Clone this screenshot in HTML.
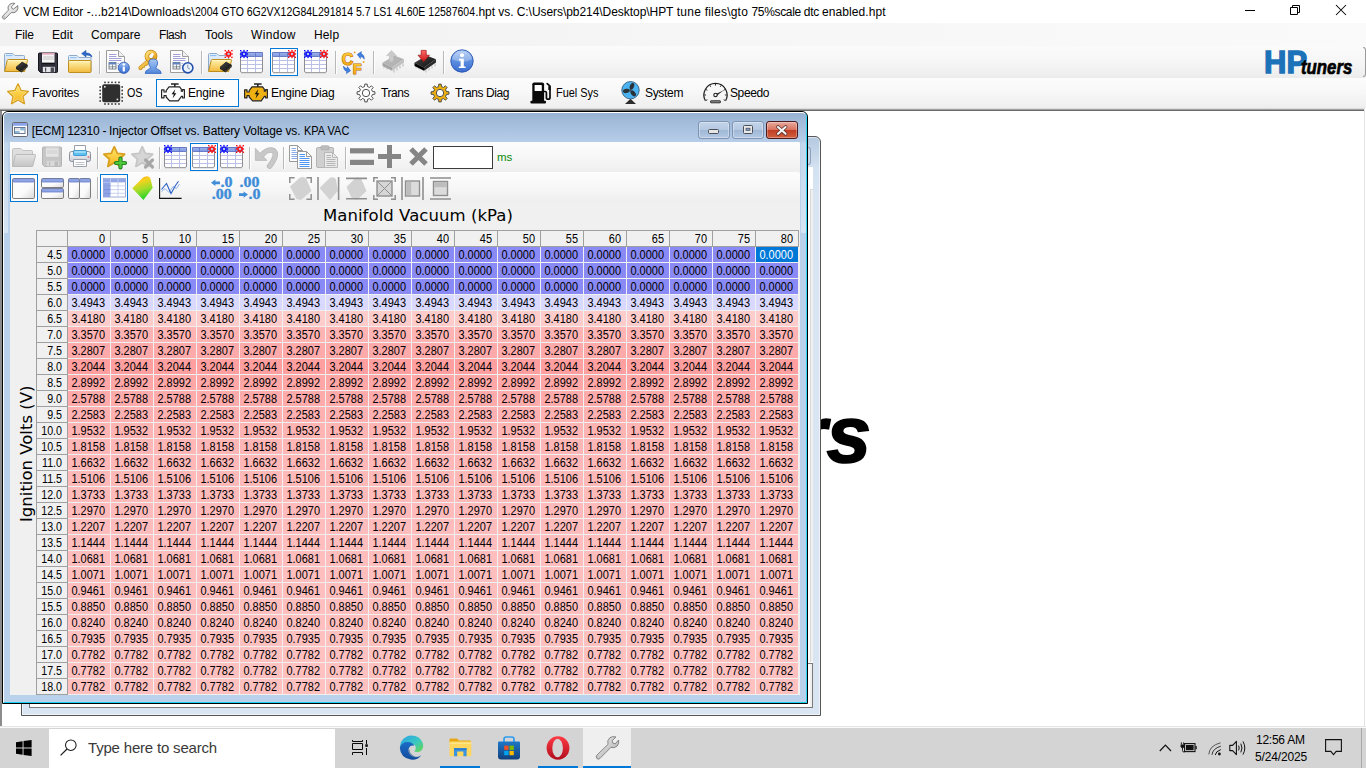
<!DOCTYPE html>
<html lang="en"><head><meta charset="utf-8"><title>VCM Editor</title>
<style>
*{box-sizing:border-box;margin:0;padding:0}
html,body{width:1366px;height:768px;overflow:hidden;background:#fff;font-family:"Liberation Sans",sans-serif;font-size:12px;color:#000}
body{position:relative}
.a{position:absolute}
.t{position:absolute;white-space:nowrap;line-height:1}
svg{position:absolute;overflow:visible}
/* title bar */
#titlebar{left:0;top:0;width:1366px;height:23px;background:#fff}
#menubar{left:0;top:23px;width:1366px;height:24px;background:linear-gradient(to right,#f1f1f1 0,#f3f3f3 30%,#f7f7f7 60%,#fafafa 100%)}
#toolbar{left:0;top:46px;width:1366px;height:32px;background:linear-gradient(#fbfbfb,#f6f6f6 50%,#ececec)}
#navbar{left:0;top:78px;width:1366px;height:30px;background:linear-gradient(#fcfcfc,#f7f7f7 50%,#eeeeee)}
.sep{position:absolute;width:1px;background:#b8b8b8;box-shadow:1px 0 0 #fff}
.selbox{position:absolute;border:1px solid #0078d7;background:#fcfcfc}
/* mdi */
#mdi{left:0;top:108px;width:1366px;height:618px;background:#fff;border-left:2px solid #8c8c8c;overflow:hidden}
/* grid */
.grid{position:absolute;left:36px;top:230px;width:763px;height:465px;background:#f0f0f0;font-size:12.5px;line-height:15px}
.grid i{display:block;margin-left:-14px;font-style:normal;transform:translateY(.8px) scaleX(.877);transform-origin:100% 50%}
.gr{display:flex;height:16px}
.gr span{display:block;height:16px;text-align:right;white-space:nowrap;overflow:hidden}
.rh{width:32px;border-left:1px solid #a0a0a0;border-right:1px solid #a0a0a0;border-bottom:1px solid #a0a0a0;background:#f0f0f0;padding-right:5px}
.hd .rh{border-top:1px solid #a0a0a0;height:17px}
.gr.hd{height:17px}
.gr.hd span{height:17px;line-height:15px}
.ch{width:43px;border-right:1px solid #a0a0a0;border-top:1px solid #a0a0a0;border-bottom:1px solid #a0a0a0;background:#f0f0f0;padding-right:5px}
.c{width:43px;border-right:1px solid #f0f0f0;border-bottom:1px solid #f0f0f0;background:var(--bg);padding-right:5px;background-clip:padding-box}
.c.sel{background:#0078d7;color:#fff}
.m{top:30px;font-size:12px}
.n{top:88px;font-size:12px}
#navbar .n{top:8.7px}
#menubar .m{top:6.3px}
.grip{position:absolute;width:3px;height:3px}
#hp{font-weight:bold;font-size:31px;color:#1c72b8;-webkit-text-stroke:1.3px #1c72b8;letter-spacing:0px;transform-origin:0 0}
#tun{font-weight:bold;font-style:italic;font-size:21px;color:#000;-webkit-text-stroke:.7px #000;transform:scaleX(.80);transform-origin:0 0}
#hpbig{font-weight:bold;font-size:135px;color:#1c72b8;letter-spacing:-6px;left:503px;top:205px}
#tunbig{font-weight:bold;font-style:italic;font-size:80px;color:#000;-webkit-text-stroke:1.6px #000;transform:scaleX(1);transform-origin:0 0;left:624.6px;top:287.4px}
#bgwin{left:21px;top:136px;width:800px;height:580px;border:1px solid #565656;border-radius:6px 6px 0 0;background:linear-gradient(#b4c9e0,#d3e1f0 30px,#d9e5f3 60px);box-shadow:inset 0 0 0 1px rgba(255,255,255,.55)}
#bgcap{left:786px;top:10px;width:3px;height:18px;border:1px solid #8fa3bf;border-left:none;border-radius:0 3px 3px 0;background:#c9d9ec}
#bgclient{left:7px;top:30px;width:784px;height:541px;background:#fff}
#child{left:2px;top:111px;width:806px;height:593px;border:1px solid #000;border-radius:6px 6px 0 0;background:#b9d1ea;overflow:hidden}
#cframe{left:0;top:0;width:804px;height:591px;border-radius:5px 5px 0 0;border:1px solid;border-color:#fff #2fd6f5 #19d3f0 #fff;background:linear-gradient(#98b3d3,#b7cee9 29px,#b9d1ea 30px)}
.ct{font-size:12px;top:13.3px}
.tt{font-size:12px;top:5.5px}
.capbtn{border:1px solid #7f93b2;border-radius:3px;background:linear-gradient(#c3d4e9,#b5c9e2 48%,#a0b8d6 52%,#b3c9e4);box-shadow:inset 0 0 0 1px rgba(255,255,255,.35)}
.capbtn.close{border-color:#4a1a1e;background:linear-gradient(#e8aa9e,#d9735f 48%,#c13d23 52%,#d2613f);box-shadow:inset 0 0 0 1px rgba(255,255,255,.3)}
#client{left:7px;top:30px;width:790px;height:553px;background:#f0f0f0}
.tb{background:linear-gradient(#fdfdfd,#f7f7f7 50%,#eeeeee);border-radius:0 3px 3px 0}
#client .grid{left:26px;top:88px}
#xtitle{font-family:"DejaVu Sans",sans-serif;font-size:16.5px;left:313px;top:65.8px}
#ytitle{font-family:"DejaVu Sans",sans-serif;font-size:16.5px;left:8.8px;top:380px;transform:rotate(-90deg);transform-origin:0 0}
#taskbar{left:0;top:728px;width:1366px;height:40px;background:#d4d4d4}
#search{left:49px;top:1px;width:286px;height:39px;background:#fff}

#mdiline{left:0;top:108px;width:1366px;height:3px;background:linear-gradient(#dcdcdc 0,#dcdcdc 1px,#a0a0a0 1px,#a0a0a0 2px,#696969 2px)}
#bgstrip{left:781px;top:22px;width:3px;height:473px;background:#f0f0f0;border-left:1px solid #d8d8d8;border-top:1px solid #d8d8d8}
#bgbox{left:0;top:496px;width:784px;height:45px;border:1px solid #7a7a7a;background:#fff;box-shadow:inset -2px 0 0 #f0f0f0}
.ul{top:38px;height:2px;background:#0078d7}
.grid .rh i{transform:translateY(.8px) scaleX(.855)}
#mdiright{left:1364px;top:108px;width:2px;height:618px;background:linear-gradient(to right,#e3e3e3 0,#e3e3e3 1px,#fff 1px)}
.refl{top:30px;height:91px;background:linear-gradient(rgba(255,255,255,.12),rgba(255,255,255,.42))}
#ttl1{letter-spacing:-0.146px}
#ttl2{letter-spacing:0.056px}
#ttl3{transform:scaleX(0.8749);transform-origin:0 0}
#ttl4{letter-spacing:-0.054px}
#ttl4b{letter-spacing:0.232px}
#ttl5{letter-spacing:-0.340px}
#ttl5b{letter-spacing:0.088px}
#mFile{letter-spacing:-0.111px}
#mEdit{letter-spacing:0.028px}
#mCompare{letter-spacing:0.020px}
#mFlash{letter-spacing:-0.449px}
#mTools{letter-spacing:-0.063px}
#mWindow{letter-spacing:0.335px}
#mHelp{letter-spacing:0.128px}
#nFav{letter-spacing:-0.262px}
#nOS{transform:scaleX(0.8937);transform-origin:0 0}
#nEng{letter-spacing:-0.162px}
#nEngD{letter-spacing:-0.172px}
#nTr{letter-spacing:-0.447px}
#nTrD{letter-spacing:-0.435px}
#nFuel{transform:scaleX(0.9103);transform-origin:0 0}
#nSys{letter-spacing:-0.319px}
#nSpd{letter-spacing:-0.379px}
#ct1{letter-spacing:-0.221px}
#ct2{letter-spacing:-0.132px}
#ct3{transform:scaleX(0.9137);transform-origin:0 0}
#xtitle{letter-spacing:0.058px}
#srch{letter-spacing:-0.188px}
#clk{letter-spacing:-0.250px}
#dat{letter-spacing:-0.155px}

</style></head>
<body>
<svg width="0" height="0" style="left:0;top:0"><defs>
<linearGradient id="gFold" x1="0" y1="0" x2="0" y2="1"><stop offset="0" stop-color="#fff3b0"/><stop offset="1" stop-color="#f2b93c"/></linearGradient>
<linearGradient id="gFoldB" x1="0" y1="0" x2="0" y2="1"><stop offset="0" stop-color="#e8f1fb"/><stop offset="1" stop-color="#b8d2ee"/></linearGradient>
<linearGradient id="gGrayF" x1="0" y1="0" x2="0" y2="1"><stop offset="0" stop-color="#e4e4e4"/><stop offset="1" stop-color="#c4c4c4"/></linearGradient>
<linearGradient id="gStar" x1="0" y1="0" x2="0" y2="1"><stop offset="0" stop-color="#ffe96a"/><stop offset="1" stop-color="#f6b21d"/></linearGradient>
<linearGradient id="gInfo" x1="0" y1="0" x2="0" y2="1"><stop offset="0" stop-color="#a4c4f4"/><stop offset="0.5" stop-color="#5c8ee0"/><stop offset="1" stop-color="#3a6cd0"/></linearGradient>
<linearGradient id="gHdr" x1="0" y1="0" x2="0" y2="1"><stop offset="0" stop-color="#9fb4ec"/><stop offset="1" stop-color="#7f97de"/></linearGradient>
<linearGradient id="gPane" x1="0" y1="0" x2="1" y2="1"><stop offset="0" stop-color="#ffffff"/><stop offset="0.6" stop-color="#fafafa"/><stop offset="1" stop-color="#d8d8d8"/></linearGradient>
<linearGradient id="gUser" x1="0" y1="0" x2="0" y2="1"><stop offset="0" stop-color="#a9c8f5"/><stop offset="1" stop-color="#4f86da"/></linearGradient>
<linearGradient id="gKey" x1="0" y1="0" x2="1" y2="1"><stop offset="0" stop-color="#ffe27a"/><stop offset="1" stop-color="#e39a12"/></linearGradient>
<linearGradient id="gSurf" x1="0" y1="0" x2="0.3" y2="1"><stop offset="0" stop-color="#ff8a1e"/><stop offset="0.3" stop-color="#f7d21c"/><stop offset="0.65" stop-color="#9fdc2a"/><stop offset="1" stop-color="#2ed42a"/></linearGradient>
<linearGradient id="gCF" x1="0" y1="0" x2="0" y2="1"><stop offset="0" stop-color="#ffd23a"/><stop offset="1" stop-color="#f39a0c"/></linearGradient>
<linearGradient id="gChip" x1="0" y1="0" x2="1" y2="1"><stop offset="0" stop-color="#4a4a4a"/><stop offset="1" stop-color="#0c0c0c"/></linearGradient>
<linearGradient id="gRedA" x1="0" y1="0" x2="0" y2="1"><stop offset="0" stop-color="#ff6a6a"/><stop offset="1" stop-color="#c81414"/></linearGradient>
<linearGradient id="gPrn" x1="0" y1="0" x2="0" y2="1"><stop offset="0" stop-color="#f8f8f8"/><stop offset="1" stop-color="#c9ced6"/></linearGradient>
<linearGradient id="gClose" x1="0" y1="0" x2="0" y2="1"><stop offset="0" stop-color="#e9a79b"/><stop offset="0.45" stop-color="#d4614d"/><stop offset="0.5" stop-color="#c43c25"/><stop offset="1" stop-color="#d4623a"/></linearGradient>
<linearGradient id="gCapBtn" x1="0" y1="0" x2="0" y2="1"><stop offset="0" stop-color="#dfe8f3"/><stop offset="0.45" stop-color="#c7d6e9"/><stop offset="0.5" stop-color="#b3c6de"/><stop offset="1" stop-color="#c4d6ec"/></linearGradient>

<linearGradient id="gEdge1" x1="0" y1="0" x2="1" y2="1"><stop offset="0" stop-color="#2aa0e8"/><stop offset="0.55" stop-color="#3ac8c0"/><stop offset="1" stop-color="#6ad848"/></linearGradient>
<linearGradient id="gEdge2" x1="0" y1="0" x2="0" y2="1"><stop offset="0" stop-color="#1c6cc8"/><stop offset="1" stop-color="#124c9c"/></linearGradient>
<linearGradient id="gStore" x1="0" y1="0" x2="0" y2="1"><stop offset="0" stop-color="#1d78c8"/><stop offset="1" stop-color="#12407c"/></linearGradient>
<linearGradient id="gOpera" x1="0" y1="0" x2="0" y2="1"><stop offset="0" stop-color="#ff3a44"/><stop offset="1" stop-color="#b00c1c"/></linearGradient>
<linearGradient id="gWr2" x1="0" y1="0" x2="1" y2="1"><stop offset="0" stop-color="#fafafa"/><stop offset="1" stop-color="#cfcfcf"/></linearGradient>
<linearGradient id="gWr" x1="0" y1="0" x2="1" y2="1"><stop offset="0" stop-color="#f2f2f2"/><stop offset="1" stop-color="#a8a8a8"/></linearGradient>
</defs></svg>
<div id="titlebar" class="a">
<svg style="left:2px;top:3px" width="17" height="17" viewBox="0 0 17 17"><path d="M0.5 13.3L6.3 7.3Q5 3.6 7.8 1.3Q10 -0.3 12.9 0.3L9.6 3.6Q9.2 5.6 11.4 6.2L15.8 2.6Q16.6 6 14.4 8.4Q12.2 10.4 9.2 9.6L3.4 15.6Q2.2 16.6 1 15.6Q-0.2 14.4 0.5 13.3Z" fill="url(#gWr2)" stroke="#727272" stroke-width="0.9"/><ellipse cx="2.1" cy="14.3" rx="1.1" ry="0.8" transform="rotate(-45 2.1 14.3)" fill="#eee" stroke="#8a8a8a" stroke-width="0.5"/></svg>
<div class="t tt" id="ttl1" style="left:23.2px">VCM Editor</div> <div class="t tt" id="ttl2" style="left:86.8px">-...b214\Downloads\</div> <div class="t tt" id="ttl3" style="left:194.7px">2004 GTO 6G2VX12G84L291814 5.7 LS1 4L60E 12587604</div><div class="t tt" id="ttl4" style="left:475.2px">.hpt vs. C:\Users\pb214\Desktop\HPT</div> <div class="t tt" id="ttl4b" style="left:676.8px">tune files\gto</div> <div class="t tt" id="ttl5" style="left:751.5px">75%scale dtc</div> <div class="t tt" id="ttl5b" style="left:821.9px">enabled.hpt</div>
<svg style="left:1245px;top:5px" width="12" height="12" viewBox="0 0 12 12"><path d="M0 5.5H10" stroke="#000" stroke-width="1" fill="none"/></svg>
<svg style="left:1290px;top:5px" width="12" height="12" viewBox="0 0 12 12"><path d="M0.5 2.5H7.5V9.5H0.5ZM2.5 2.5V0.5H9.5V7.5H7.5" stroke="#000" stroke-width="1" fill="none"/></svg>
<svg style="left:1336px;top:5px" width="12" height="12" viewBox="0 0 12 12"><path d="M0 0L10 10M10 0L0 10" stroke="#000" stroke-width="1.05" fill="none"/></svg>
</div>
<div id="menubar" class="a">
<div class="t m" id="mFile" style="left:15px">File</div>
<div class="t m" id="mEdit" style="left:52px">Edit</div>
<div class="t m" id="mCompare" style="left:91px">Compare</div>
<div class="t m" id="mFlash" style="left:159px">Flash</div>
<div class="t m" id="mTools" style="left:205px">Tools</div>
<div class="t m" id="mWindow" style="left:251px">Window</div>
<div class="t m" id="mHelp" style="left:314px">Help</div>
</div>
<div id="toolbar" class="a">
<div class="grip" style="left:0;top:1px"></div>
<svg style="left:4px;top:4px" width="24" height="24" viewBox="0 0 24 24"><path d="M0.5 21V4.5Q0.5 3.5 1.5 3.5H8.8L10.8 5.5H19.5Q20.5 5.5 20.5 6.5V10" fill="url(#gFoldB)" stroke="#8fa9c8"/><path d="M2 5.5H8.5" stroke="#8cc0f8" stroke-width="1.2"/><path d="M0.6 21.5L3.2 10.5Q3.5 9.5 4.5 9.5H22.8Q23.8 9.5 23.5 10.5L20.6 21.5Z" fill="url(#gFold)" stroke="#bf8f1e"/><path d="M4.4 10.6H22.4" stroke="#fff6c8" stroke-width="0.9"/><g transform="translate(12 11.6) scale(1.02)"><path d="M0 5.5L6 0.5L11.5 3.5L5.5 9Z" fill="url(#gChip)" stroke="#111" stroke-width="0.6"/><path d="M0 5.5L5.5 9V10.8L0 7.3Z" fill="#222"/><path d="M5.5 9L11.5 3.5V5.2L5.5 10.8Z" fill="#333"/></g></svg>
<svg style="left:36px;top:4.5px" width="24" height="24" viewBox="0 0 24 24"><path d="M2.5 3Q2.5 2 3.5 2H20.5Q21.5 2 21.5 3V20.5Q21.5 21.5 20.5 21.5H4.5L2.5 19.5Z" fill="#2b2b36" stroke="#15151c"/><path d="M4 3V19M20 3V20" stroke="#4a4a58" stroke-width="0.8"/><rect x="6" y="2" width="12.5" height="9.8" fill="#f4f4f4"/><rect x="6" y="2" width="12.5" height="1.6" fill="#e4a4bc"/><rect x="7" y="5" width="10.5" height="4" fill="#dcdcdc"/><path d="M6 12.3H18.5" stroke="#0c0c12" stroke-width="1"/><rect x="6.8" y="15.8" width="12" height="5.4" fill="#e4e4ea"/><rect x="14.6" y="16.4" width="3.4" height="4.6" fill="#4c4c56"/><rect x="9" y="16.6" width="1.2" height="4" fill="#4c4c56"/></svg>
<svg style="left:68px;top:4px" width="25" height="24" viewBox="0 0 25 24"><path d="M0.5 21V6.5Q0.5 5.5 1.5 5.5H9L11 7.5H22Q23 7.5 23 8.5V21Q23 22 22 22H1.5Q0.5 22 0.5 21Z" fill="url(#gFoldB)" stroke="#8fa9c8"/><path d="M2 7.6H8.6" stroke="#8cc0f8" stroke-width="1.1"/><path d="M0.5 21.5V11.5Q0.5 10.5 1.5 10.5H22Q23 10.5 23 11.5V21.5Q23 22.5 22 22.5H1.5Q0.5 22.5 0.5 21.5Z" fill="url(#gFold)" stroke="#bf8f1e"/><path d="M1.6 11.7H22" stroke="#fff6c8" stroke-width="0.9"/><path d="M24 7.2Q23.4 2.8 18 3V0.4L13.6 3.6L18 6.9V5Q21.5 4.8 24 7.2Z" fill="#2a6ac8" stroke="#1a4c9c" stroke-width="0.5"/></svg>
<div class="sep" style="left:99px;top:5px;height:23px"></div>
<svg style="left:106px;top:4px" width="24" height="24" viewBox="0 0 24 24"><path d="M0.5 0.5H12.5L18.5 6.5V22.5H0.5Z" fill="#fdfdfd" stroke="#9c9c9c"/><path d="M12.5 0.5V6.5H18.5" fill="#f0f0f0" stroke="#9c9c9c"/><path d="M3 4.5H10.5M3 6.5H10.5M3 8.5H15.5M3 10.5H15.5" stroke="#9a96d4" stroke-width="0.9"/><rect x="3" y="12.5" width="7" height="6.5" fill="#fff" stroke="#707880" stroke-width="0.9"/><rect x="3" y="12.5" width="7" height="2" fill="#5f86c4"/><path d="M6.5 14.5V19M3 16.8H10" stroke="#707880" stroke-width="0.8"/><path d="M11.5 13.5H13M11.5 15.5H12.5" stroke="#9a96d4" stroke-width="0.8"/><circle cx="17.8" cy="17.8" r="5.6" fill="url(#gInfo)" stroke="#2a55b0" stroke-width="0.8"/><rect x="16.7" y="16.6" width="2.2" height="4.8" fill="#fff"/><circle cx="17.8" cy="14.6" r="1.25" fill="#fff"/></svg>
<svg style="left:137.5px;top:4px" width="25" height="24" viewBox="0 0 25 24"><path d="M9.8 9.2L0.8 17L1.2 19.6L4 19.4L4.4 17.6L6.4 17.6L6.8 15.6L8.8 15.4L12.6 12Z" fill="url(#gKey)" stroke="#c07f08" stroke-width="0.7"/><circle cx="13" cy="6.2" r="4.2" fill="none" stroke="#c07f08" stroke-width="4.4"/><circle cx="13" cy="6.2" r="4.2" fill="none" stroke="url(#gKey)" stroke-width="3.2"/><circle cx="14.2" cy="4.6" r="1.5" fill="#fff"/><path d="M7.2 23.4Q7.2 20.4 10.8 19.2Q12.6 18.6 12.4 17.2Q10.8 15.6 10.8 13Q10.8 9 15.2 9Q19.6 9 19.6 13Q19.6 15.6 18 17.2Q17.8 18.6 19.6 19.2Q23.2 20.4 23.2 23.4Z" fill="url(#gUser)" stroke="#2f62c0" stroke-width="0.8"/></svg>
<svg style="left:170px;top:4px" width="24" height="24" viewBox="0 0 24 24"><path d="M0.5 0.5H12.5L18.5 6.5V22.5H0.5Z" fill="#fdfdfd" stroke="#9c9c9c"/><path d="M12.5 0.5V6.5H18.5" fill="#f0f0f0" stroke="#9c9c9c"/><path d="M3 4.5H10.5M3 6.5H10.5M3 8.5H15.5M3 10.5H15.5" stroke="#9a96d4" stroke-width="0.9"/><rect x="3" y="12.5" width="7" height="6.5" fill="#fff" stroke="#707880" stroke-width="0.9"/><rect x="3" y="12.5" width="7" height="2" fill="#5f86c4"/><path d="M6.5 14.5V19M3 16.8H10" stroke="#707880" stroke-width="0.8"/><path d="M11.5 13.5H13M11.5 15.5H12.5" stroke="#9a96d4" stroke-width="0.8"/><circle cx="17.8" cy="17.8" r="5.1" fill="#eaf2fc" stroke="#2450ac" stroke-width="1.6"/><path d="M17.8 14.6V18L20 19.2" stroke="#8a96b0" stroke-width="1" fill="none"/></svg>
<div class="sep" style="left:201px;top:5px;height:23px"></div>
<svg style="left:208px;top:4px" width="24" height="24" viewBox="0 0 24 24"><path d="M0.5 21V4.5Q0.5 3.5 1.5 3.5H8.8L10.8 5.5H19.5Q20.5 5.5 20.5 6.5V10" fill="url(#gFoldB)" stroke="#8fa9c8"/><path d="M2 5.5H8.5" stroke="#8cc0f8" stroke-width="1.2"/><path d="M0.6 21.5L3.2 10.5Q3.5 9.5 4.5 9.5H22.8Q23.8 9.5 23.5 10.5L20.6 21.5Z" fill="url(#gFold)" stroke="#bf8f1e"/><path d="M4.4 10.6H22.4" stroke="#fff6c8" stroke-width="0.9"/><g transform="translate(12 11.6) scale(1.02)"><path d="M0 5.5L6 0.5L11.5 3.5L5.5 9Z" fill="url(#gChip)" stroke="#111" stroke-width="0.6"/><path d="M0 5.5L5.5 9V10.8L0 7.3Z" fill="#222"/><path d="M5.5 9L11.5 3.5V5.2L5.5 10.8Z" fill="#333"/></g><g transform="translate(16.6 0)"><rect x="0.00" y="0.00" width="1.4" height="1.4" fill="#ff1010"/><rect x="6.60" y="0.00" width="1.4" height="1.4" fill="#ff1010"/><rect x="0.00" y="6.60" width="1.4" height="1.4" fill="#ff1010"/><rect x="6.60" y="6.60" width="1.4" height="1.4" fill="#ff1010"/><rect x="3.30" y="-0.10" width="1.4" height="1.4" fill="#ff1010"/><rect x="3.30" y="6.70" width="1.4" height="1.4" fill="#ff1010"/><rect x="-0.10" y="3.30" width="1.4" height="1.4" fill="#ff1010"/><rect x="6.70" y="3.30" width="1.4" height="1.4" fill="#ff1010"/><path d="M1.6 1.6L6.4 6.4M6.4 1.6L1.6 6.4" stroke="#ff1010" stroke-width="1"/><circle cx="4" cy="4" r="2.05" fill="#b4c4e4" stroke="#ff1010" stroke-width="1.6"/></g></svg>
<svg style="left:240px;top:4px" width="24" height="24" viewBox="0 0 24 24"><path d="M0.5 2.5H22.5V21Q22.5 22.5 21 22.5H2Q0.5 22.5 0.5 21Z" fill="#fff" stroke="#8e8e92"/><path d="M1 22.9H22" stroke="#b8b8b8" stroke-width="0.8"/><path d="M1 10.5H22M1 14.5H22M1 18.5H22M7.5 6V22M15.5 6V22" stroke="#bcc0e6" stroke-width="1" fill="none"/><rect x="0.5" y="2.5" width="22" height="4" rx="0.8" fill="url(#gHdr)" stroke="#5f74c6" stroke-width="0.9"/><path d="M7.5 2.5V6.5M15.5 2.5V6.5" stroke="#5f74c6" stroke-width="0.8"/><g transform="translate(0 0)"><rect x="0.00" y="0.00" width="1.4" height="1.4" fill="#1010ff"/><rect x="6.60" y="0.00" width="1.4" height="1.4" fill="#1010ff"/><rect x="0.00" y="6.60" width="1.4" height="1.4" fill="#1010ff"/><rect x="6.60" y="6.60" width="1.4" height="1.4" fill="#1010ff"/><rect x="3.30" y="-0.10" width="1.4" height="1.4" fill="#1010ff"/><rect x="3.30" y="6.70" width="1.4" height="1.4" fill="#1010ff"/><rect x="-0.10" y="3.30" width="1.4" height="1.4" fill="#1010ff"/><rect x="6.70" y="3.30" width="1.4" height="1.4" fill="#1010ff"/><path d="M1.6 1.6L6.4 6.4M6.4 1.6L1.6 6.4" stroke="#1010ff" stroke-width="1"/><circle cx="4" cy="4" r="2.05" fill="#b4c4e4" stroke="#1010ff" stroke-width="1.6"/></g></svg>
<div class="selbox" style="left:270px;top:2px;width:28px;height:28px"></div>
<svg style="left:272px;top:4px" width="24" height="24" viewBox="0 0 24 24"><path d="M0.5 2.5H22.5V21Q22.5 22.5 21 22.5H2Q0.5 22.5 0.5 21Z" fill="#fff" stroke="#8e8e92"/><path d="M1 22.9H22" stroke="#b8b8b8" stroke-width="0.8"/><path d="M1 10.5H22M1 14.5H22M1 18.5H22M7.5 6V22M15.5 6V22" stroke="#bcc0e6" stroke-width="1" fill="none"/><rect x="0.5" y="2.5" width="22" height="4" rx="0.8" fill="url(#gHdr)" stroke="#5f74c6" stroke-width="0.9"/><path d="M7.5 2.5V6.5M15.5 2.5V6.5" stroke="#5f74c6" stroke-width="0.8"/><g transform="translate(16 0)"><rect x="0.00" y="0.00" width="1.4" height="1.4" fill="#ff1010"/><rect x="6.60" y="0.00" width="1.4" height="1.4" fill="#ff1010"/><rect x="0.00" y="6.60" width="1.4" height="1.4" fill="#ff1010"/><rect x="6.60" y="6.60" width="1.4" height="1.4" fill="#ff1010"/><rect x="3.30" y="-0.10" width="1.4" height="1.4" fill="#ff1010"/><rect x="3.30" y="6.70" width="1.4" height="1.4" fill="#ff1010"/><rect x="-0.10" y="3.30" width="1.4" height="1.4" fill="#ff1010"/><rect x="6.70" y="3.30" width="1.4" height="1.4" fill="#ff1010"/><path d="M1.6 1.6L6.4 6.4M6.4 1.6L1.6 6.4" stroke="#ff1010" stroke-width="1"/><circle cx="4" cy="4" r="2.05" fill="#b4c4e4" stroke="#ff1010" stroke-width="1.6"/></g></svg>
<svg style="left:304px;top:4px" width="24" height="24" viewBox="0 0 24 24"><path d="M0.5 2.5H22.5V21Q22.5 22.5 21 22.5H2Q0.5 22.5 0.5 21Z" fill="#fff" stroke="#8e8e92"/><path d="M1 22.9H22" stroke="#b8b8b8" stroke-width="0.8"/><path d="M1 10.5H22M1 14.5H22M1 18.5H22M7.5 6V22M15.5 6V22" stroke="#bcc0e6" stroke-width="1" fill="none"/><rect x="0.5" y="2.5" width="22" height="4" rx="0.8" fill="url(#gHdr)" stroke="#5f74c6" stroke-width="0.9"/><path d="M7.5 2.5V6.5M15.5 2.5V6.5" stroke="#5f74c6" stroke-width="0.8"/><g transform="translate(0 0)"><rect x="0.00" y="0.00" width="1.4" height="1.4" fill="#1010ff"/><rect x="6.60" y="0.00" width="1.4" height="1.4" fill="#1010ff"/><rect x="0.00" y="6.60" width="1.4" height="1.4" fill="#1010ff"/><rect x="6.60" y="6.60" width="1.4" height="1.4" fill="#1010ff"/><rect x="3.30" y="-0.10" width="1.4" height="1.4" fill="#1010ff"/><rect x="3.30" y="6.70" width="1.4" height="1.4" fill="#1010ff"/><rect x="-0.10" y="3.30" width="1.4" height="1.4" fill="#1010ff"/><rect x="6.70" y="3.30" width="1.4" height="1.4" fill="#1010ff"/><path d="M1.6 1.6L6.4 6.4M6.4 1.6L1.6 6.4" stroke="#1010ff" stroke-width="1"/><circle cx="4" cy="4" r="2.05" fill="#b4c4e4" stroke="#1010ff" stroke-width="1.6"/></g><g transform="translate(16 0)"><rect x="0.00" y="0.00" width="1.4" height="1.4" fill="#ff1010"/><rect x="6.60" y="0.00" width="1.4" height="1.4" fill="#ff1010"/><rect x="0.00" y="6.60" width="1.4" height="1.4" fill="#ff1010"/><rect x="6.60" y="6.60" width="1.4" height="1.4" fill="#ff1010"/><rect x="3.30" y="-0.10" width="1.4" height="1.4" fill="#ff1010"/><rect x="3.30" y="6.70" width="1.4" height="1.4" fill="#ff1010"/><rect x="-0.10" y="3.30" width="1.4" height="1.4" fill="#ff1010"/><rect x="6.70" y="3.30" width="1.4" height="1.4" fill="#ff1010"/><path d="M1.6 1.6L6.4 6.4M6.4 1.6L1.6 6.4" stroke="#ff1010" stroke-width="1"/><circle cx="4" cy="4" r="2.05" fill="#b4c4e4" stroke="#ff1010" stroke-width="1.6"/></g></svg>
<div class="sep" style="left:335px;top:5px;height:23px"></div>
<svg style="left:341px;top:4px" width="26" height="24" viewBox="0 0 26 24"><text x="0.8" y="15.4" font-size="16" font-family="Liberation Sans, sans-serif" font-weight="bold" fill="url(#gCF)" stroke="#b36a00" stroke-width="1.1" paint-order="stroke" stroke-linejoin="round">C</text><text x="11.8" y="24" font-size="14.5" font-family="Liberation Sans, sans-serif" font-weight="bold" fill="url(#gCF)" stroke="#b36a00" stroke-width="1.1" paint-order="stroke" stroke-linejoin="round">F</text><path d="M16.2 4.4L20.4 1.6L20.2 3.6Q23.4 5 23.4 9.2Q21.6 6.6 19.6 6.6L19.4 8.6Z" fill="#3f7fe0" stroke="#2a5cb8" stroke-width="0.5"/><path d="M9.6 20.8L5.4 23.6L5.6 21.6Q2.4 20.2 2.4 16Q4.2 18.6 6.2 18.6L6.4 16.6Z" fill="#3f7fe0" stroke="#2a5cb8" stroke-width="0.5"/><circle cx="13.6" cy="2.4" r="0.9" fill="#e8a010"/><circle cx="22.6" cy="12" r="0.9" fill="#e8a010"/></svg>
<div class="sep" style="left:373px;top:5px;height:23px"></div>
<svg style="left:381px;top:4px" width="24" height="24" viewBox="0 0 24 24"><path d="M13 19.5V22.5M16 17.6V20.6M19 15.6V18.6M22 13.6V16.4" stroke="#c4c4c4" stroke-width="1.3"/><path d="M3 16.5V18.2M6 18V19.6" stroke="#c4c4c4" stroke-width="1.1"/><path d="M1.5 12.8L13.5 5.6L23 9.2L11 17.4Z" fill="#b4b4b4"/><path d="M1.5 12.8L11 17.4V20.8L1.5 16Z" fill="#a4a4a4"/><path d="M11 17.4L23 9.2V12.6L11 20.8Z" fill="#c0c0c0"/><path d="M10.5 0.4L15.4 5.6H12.6V11L8.4 12.4V5.6H5.6Z" fill="#cacaca" stroke="#b8b8b8" stroke-width="0.5"/></svg>
<svg style="left:413px;top:4px" width="24" height="24" viewBox="0 0 24 24"><path d="M13 19.5V22.5M16 17.6V20.6M19 15.6V18.6M22 13.6V16.4" stroke="#c8c8c8" stroke-width="1.3"/><path d="M3 16.5V18.2M6 18V19.6" stroke="#c8c8c8" stroke-width="1.1"/><path d="M1.5 12.8L13.5 5.6L23 9.2L11 17.4Z" fill="url(#gChip)"/><path d="M1.5 12.8L11 17.4V20.8L1.5 16Z" fill="#050505"/><path d="M11 17.4L23 9.2V12.6L11 20.8Z" fill="#2a2a2a"/><path d="M8.2 0.4H13.2V5.2H16.4L10.7 11.8L5 5.2H8.2Z" fill="url(#gRedA)" stroke="#9c1010" stroke-width="0.7"/></svg>
<div class="sep" style="left:443px;top:5px;height:23px"></div>
<svg style="left:449.6px;top:3.4px" width="24" height="24" viewBox="0 0 24 24"><circle cx="12" cy="12" r="11.2" fill="url(#gInfo)" stroke="#2a55b0" stroke-width="0.9"/><path d="M2 10Q4 2 12 1.6Q20 2 22 10Q17 13 12 13Q7 13 2 10Z" fill="#fff" opacity="0.28"/><circle cx="12" cy="6.2" r="2" fill="#fff"/><path d="M9 9.8H13.8V17.4H15.6V19H8.8V17.4H10.6V11.4H9Z" fill="#fff"/></svg>
<div class="t" id="hp" style="left:1264px;top:0.7px">HP</div>
<div class="t" id="tun" style="left:1300.6px;top:10.2px">tuners</div>
<div class="a" style="left:1363px;top:1px;width:3px;height:30px;border:1px solid #9a9a9a;border-left:none;border-radius:0 3px 3px 0"></div>
</div>
<div id="navbar" class="a">
<div class="grip" style="left:0;top:1px"></div>
<svg style="left:5.5px;top:3.5px" width="24" height="24" viewBox="0 0 24 24"><path d="M12.00 2.00L15.00 8.67L22.27 9.46L16.85 14.38L18.35 21.54L12.00 17.90L5.65 21.54L7.15 14.38L1.73 9.46L9.00 8.67Z" fill="url(#gStar)" stroke="#d8a020" stroke-width="1.6" stroke-linejoin="round"/><path d="M12.00 4.00L14.41 9.48L20.37 10.08L15.90 14.07L17.17 19.92L12.00 16.90L6.83 19.92L8.10 14.07L3.63 10.08L9.59 9.48Z" fill="none" stroke="#fff6b8" stroke-width="0.7" stroke-linejoin="round" opacity="0.7"/></svg>
<div class="t n" id="nFav" style="left:32px">Favorites</div>
<svg style="left:99px;top:3px" width="24.4" height="24.4" viewBox="0 0 24.4 24.4"><rect x="3.2" y="3.2" width="18" height="18" rx="2" fill="#2f2f2f"/><rect x="5.2" y="0.6" width="1.6" height="1.6" fill="#3a3a3a"/><rect x="5.2" y="22.2" width="1.6" height="1.6" fill="#3a3a3a"/><rect x="0.4" y="5.2" width="1.6" height="1.6" fill="#3a3a3a"/><rect x="22.4" y="5.2" width="1.6" height="1.6" fill="#3a3a3a"/><rect x="8.7" y="0.6" width="1.6" height="1.6" fill="#3a3a3a"/><rect x="8.7" y="22.2" width="1.6" height="1.6" fill="#3a3a3a"/><rect x="0.4" y="8.7" width="1.6" height="1.6" fill="#3a3a3a"/><rect x="22.4" y="8.7" width="1.6" height="1.6" fill="#3a3a3a"/><rect x="12.2" y="0.6" width="1.6" height="1.6" fill="#3a3a3a"/><rect x="12.2" y="22.2" width="1.6" height="1.6" fill="#3a3a3a"/><rect x="0.4" y="12.2" width="1.6" height="1.6" fill="#3a3a3a"/><rect x="22.4" y="12.2" width="1.6" height="1.6" fill="#3a3a3a"/><rect x="15.7" y="0.6" width="1.6" height="1.6" fill="#3a3a3a"/><rect x="15.7" y="22.2" width="1.6" height="1.6" fill="#3a3a3a"/><rect x="0.4" y="15.7" width="1.6" height="1.6" fill="#3a3a3a"/><rect x="22.4" y="15.7" width="1.6" height="1.6" fill="#3a3a3a"/><rect x="19.2" y="0.6" width="1.6" height="1.6" fill="#3a3a3a"/><rect x="19.2" y="22.2" width="1.6" height="1.6" fill="#3a3a3a"/><rect x="0.4" y="19.2" width="1.6" height="1.6" fill="#3a3a3a"/><rect x="22.4" y="19.2" width="1.6" height="1.6" fill="#3a3a3a"/><rect x="5" y="5" width="1.6" height="1.6" fill="#e8e8e8"/><rect x="17.6" y="17.6" width="1.6" height="1.6" fill="#e8e8e8"/></svg>
<div class="t n" id="nOS" style="left:127px">OS</div>
<div class="selbox" style="left:156px;top:1px;width:83px;height:28px"></div>
<svg style="left:161px;top:5.2px" width="24" height="19" viewBox="0 0 24 19"><path d="M10 1H17.6" stroke="#222" stroke-width="1.5" fill="none"/><path d="M13.8 1V4" stroke="#222" stroke-width="1.6" fill="none"/><path d="M8 3.8H18.6L20.3 6.2V8.2H21.6V6.6H23.4V15H21.6V13.4H20.3V13.6L17.2 17.8H8.6L5.2 14V12.6H3V14.8H0.6V6.8H3V9H5.2V7.6Z" fill="#fff" stroke="#222" stroke-width="1.15" stroke-linejoin="round"/><path d="M14.2 6.2L10.6 11.2H12.8L11.6 15.6L15.4 10.2H13.2Z" fill="#111"/></svg>
<div class="t n" id="nEng" style="left:188px">Engine</div>
<svg style="left:244px;top:5.2px" width="24" height="19" viewBox="0 0 24 19"><path d="M10 1H17.6" stroke="#222" stroke-width="1.5" fill="none"/><path d="M13.8 1V4" stroke="#222" stroke-width="1.6" fill="none"/><path d="M8 3.8H18.6L20.3 6.2V8.2H21.6V6.6H23.4V15H21.6V13.4H20.3V13.6L17.2 17.8H8.6L5.2 14V12.6H3V14.8H0.6V6.8H3V9H5.2V7.6Z" fill="#eeb111" stroke="#222" stroke-width="1.15" stroke-linejoin="round"/><path d="M14.2 6.2L10.6 11.2H12.8L11.6 15.6L15.4 10.2H13.2Z" fill="#111"/></svg>
<div class="t n" id="nEngD" style="left:271px">Engine Diag</div>
<svg style="left:356px;top:4.9px" width="20" height="20" viewBox="0 0 20 20"><path d="M8.56 3.56L8.80 1.08L11.20 1.08L11.44 3.56L13.54 4.43L15.46 2.85L17.15 4.54L15.57 6.46L16.44 8.56L18.92 8.80L18.92 11.20L16.44 11.44L15.57 13.54L17.15 15.46L15.46 17.15L13.54 15.57L11.44 16.44L11.20 18.92L8.80 18.92L8.56 16.44L6.46 15.57L4.54 17.15L2.85 15.46L4.43 13.54L3.56 11.44L1.08 11.20L1.08 8.80L3.56 8.56L4.43 6.46L2.85 4.54L4.54 2.85L6.46 4.43Z" fill="#fff" stroke="#3c3c3c" stroke-width="0.9" stroke-linejoin="round"/><circle cx="10" cy="10" r="3.7" fill="#fff" stroke="#3c3c3c" stroke-width="0.9"/></svg>
<div class="t n" id="nTr" style="left:381px">Trans</div>
<svg style="left:430px;top:4.9px" width="20" height="20" viewBox="0 0 20 20"><path d="M8.56 3.56L8.80 1.08L11.20 1.08L11.44 3.56L13.54 4.43L15.46 2.85L17.15 4.54L15.57 6.46L16.44 8.56L18.92 8.80L18.92 11.20L16.44 11.44L15.57 13.54L17.15 15.46L15.46 17.15L13.54 15.57L11.44 16.44L11.20 18.92L8.80 18.92L8.56 16.44L6.46 15.57L4.54 17.15L2.85 15.46L4.43 13.54L3.56 11.44L1.08 11.20L1.08 8.80L3.56 8.56L4.43 6.46L2.85 4.54L4.54 2.85L6.46 4.43Z" fill="#eeb111" stroke="#3c3c3c" stroke-width="0.9" stroke-linejoin="round"/><circle cx="10" cy="10" r="3.7" fill="#fff" stroke="#3c3c3c" stroke-width="0.9"/></svg>
<div class="t n" id="nTrD" style="left:455px">Trans Diag</div>
<svg style="left:530.2px;top:4px" width="23" height="22" viewBox="0 0 23 22"><path d="M2.3 2.2Q2.3 0.4 4.1 0.4H12.3Q14.1 0.4 14.1 2.2V19H2.3Z" fill="#0a0a0a"/><rect x="0.4" y="18.8" width="15.6" height="2.8" rx="1" fill="#0a0a0a"/><rect x="4.6" y="2.9" width="7.2" height="6.2" rx="0.6" fill="#fff"/><path d="M14 9.5H15.2Q16.4 9.5 16.4 10.7V15.4Q16.4 17.2 18.2 17.2Q20 17.2 20 15.4V4.2L17.2 1.6" fill="none" stroke="#0a0a0a" stroke-width="1.7" stroke-linecap="round" stroke-linejoin="round"/><path d="M18.3 4.2H20.4V8H18.3Z" fill="#0a0a0a"/></svg>
<div class="t n" id="nFuel" style="left:556px">Fuel Sys</div>
<svg style="left:618.8px;top:3.3px" width="23" height="24" viewBox="0 0 23 24"><path d="M6 23L11.5 17.8L17 23Z" fill="#2c2c2c"/><circle cx="11.5" cy="9.2" r="8.7" fill="#4bb3f2" stroke="#3a5c78" stroke-width="0.9"/><ellipse cx="11.5" cy="5" rx="2.1" ry="3.4" fill="#2b3238" transform="rotate(-100 11.5 9.2)"/><ellipse cx="11.5" cy="5" rx="2.1" ry="3.4" fill="#2b3238" transform="rotate(20 11.5 9.2)"/><ellipse cx="11.5" cy="5" rx="2.1" ry="3.4" fill="#2b3238" transform="rotate(140 11.5 9.2)"/><circle cx="11.5" cy="9.2" r="1.1" fill="#444"/></svg>
<div class="t n" id="nSys" style="left:645px">System</div>
<svg style="left:702.5px;top:3.6px" width="25" height="22" viewBox="0 0 25 22"><path d="M2.45 18.80A11.6 11.6 0 1 1 22.55 18.80" fill="none" stroke="#1e1e1e" stroke-width="1.25"/><path d="M2.80 18.60L4.36 17.70" stroke="#1e1e1e" stroke-width="0.9"/><path d="M1.30 13.00L3.10 13.00" stroke="#1e1e1e" stroke-width="0.9"/><path d="M2.80 7.40L4.36 8.30" stroke="#1e1e1e" stroke-width="0.9"/><path d="M6.90 3.30L7.80 4.86" stroke="#1e1e1e" stroke-width="0.9"/><path d="M12.50 1.80L12.50 3.60" stroke="#1e1e1e" stroke-width="0.9"/><path d="M18.10 3.30L17.20 4.86" stroke="#1e1e1e" stroke-width="0.9"/><path d="M22.20 7.40L20.64 8.30" stroke="#1e1e1e" stroke-width="0.9"/><path d="M23.70 13.00L21.90 13.00" stroke="#1e1e1e" stroke-width="0.9"/><path d="M22.20 18.60L20.64 17.70" stroke="#1e1e1e" stroke-width="0.9"/><path d="M13.2 12L21 8L14 13.6Z" fill="#1e1e1e"/><circle cx="12.5" cy="13" r="1.7" fill="#fff" stroke="#1e1e1e" stroke-width="1.1"/><rect x="7.6" y="18.8" width="9.8" height="2" rx="0.4" fill="#9a9a9a" stroke="#1e1e1e" stroke-width="0.9"/></svg>
<div class="t n" id="nSpd" style="left:730px">Speedo</div>
</div>
<div id="mdi" class="a">
<div class="t" id="hpbig">HP</div>
<div class="t" id="tunbig">tuners</div>
</div>
<div id="mdiline" class="a"></div>
<div id="mdiright" class="a"></div>
<div id="bgwin" class="a"><div id="bgcap" class="a"></div><div id="bgclient" class="a"><div id="bgstrip" class="a"></div><div id="bgbox" class="a"></div></div></div>
<div id="child" class="a">
<div id="cframe" class="a"></div>
<div class="a refl" style="left:1px;width:4px"></div><div class="a refl" style="left:798px;width:5px"></div>
<svg style="left:8.6px;top:10.2px" width="16" height="15" viewBox="0 0 16 15"><rect x="0.5" y="0.5" width="15" height="14" rx="1.2" fill="#fff" stroke="#6a6a72"/><rect x="1" y="1" width="14" height="2.8" fill="#8aa4ea"/><rect x="2.5" y="5.5" width="10.5" height="6" fill="#fff" stroke="#5a6a86" stroke-width="0.9"/><rect x="3" y="6" width="4.6" height="2.4" fill="#e4e4e4"/><rect x="8.2" y="6" width="4.4" height="2.4" fill="#8cb8d8"/><rect x="3" y="9" width="4.6" height="2.2" fill="#8cb8d8"/></svg>
<div class="t ct" id="ct1" style="left:28.8px">[ECM] 12310 -</div> <div class="t ct" id="ct2" style="left:106.0px">Injector Offset vs. Battery Voltage vs.</div> <div class="t ct" id="ct3" style="left:300.6px">KPA VAC</div>
<div class="capbtn a" style="left:695px;top:9px;width:32px;height:18px"><svg style="left:9px;top:7px" width="12" height="6" viewBox="0 0 12 6"><rect x="0.5" y="0.5" width="10" height="4" rx="1" fill="#e6e6e6" stroke="#4a4e58"/></svg></div>
<div class="capbtn a" style="left:729px;top:9px;width:32px;height:18px"><svg style="left:10px;top:3px" width="11" height="10" viewBox="0 0 11 10"><rect x="0.5" y="0.5" width="9" height="8" rx="1" fill="#e9e9e9" stroke="#4a4e58"/><rect x="3" y="3.2" width="4" height="2.2" fill="#7f9ac0" stroke="#4a4e58" stroke-width="0.7"/></svg></div>
<div class="capbtn close a" style="left:763px;top:9px;width:32px;height:18px"><svg style="left:9px;top:2.5px" width="12" height="11" viewBox="0 0 12 11"><path d="M2 2L9.6 8.8M9.6 2L2 8.8" stroke="#5a3232" stroke-width="3.6" stroke-linecap="round"/><path d="M2 2L9.6 8.8M9.6 2L2 8.8" stroke="#f6f6f6" stroke-width="2.1" stroke-linecap="round"/></svg></div>
<div id="client" class="a">
<div class="tb a" style="left:0;top:0;width:790px;height:30px"></div>
<div class="tb a" style="left:0;top:30px;width:790px;height:31px"></div>
<svg style="left:2.2px;top:3.2px" width="24" height="24" viewBox="0 0 24 24"><path d="M0.5 21V4.5Q0.5 3.5 1.5 3.5H8.8L10.8 5.5H19.5Q20.5 5.5 20.5 6.5V10" fill="#dedede" stroke="#c2c2c2"/><path d="M0.6 21.5L3.2 10.5Q3.5 9.5 4.5 9.5H22.8Q23.8 9.5 23.5 10.5L20.6 21.5Z" fill="url(#gGrayF)" stroke="#bababa"/></svg>
<svg style="left:30px;top:3.2px" width="24" height="24" viewBox="0 0 24 24"><path d="M2.5 3Q2.5 2 3.5 2H20.5Q21.5 2 21.5 3V20.5Q21.5 21.5 20.5 21.5H4.5L2.5 19.5Z" fill="#c6c6c6" stroke="#b4b4b4"/><rect x="6" y="2" width="12.5" height="9.8" fill="#e4e4e4"/><rect x="6" y="2" width="12.5" height="1.6" fill="#d2d2d2"/><rect x="7" y="5" width="10.5" height="4" fill="#d8d8d8"/><rect x="6.8" y="15.8" width="12" height="5.4" fill="#d9d9d9"/><rect x="14.6" y="16.4" width="3.4" height="4.6" fill="#bcbcbc"/><rect x="9" y="16.6" width="1.2" height="4" fill="#bcbcbc"/></svg>
<svg style="left:57.6px;top:2.2px" width="24" height="24" viewBox="0 0 24 24"><path d="M6.5 8V1.5H17.5V8" fill="#fff" stroke="#9aa0aa"/><rect x="1.5" y="7.5" width="21" height="10" rx="2" fill="url(#gPrn)" stroke="#8a909a"/><rect x="5.5" y="6.5" width="13" height="5" rx="0.8" fill="#5ec0f2" stroke="#2a8cc8" stroke-width="0.8"/><rect x="6.3" y="7.2" width="11.4" height="1.6" fill="#a8e0fa"/><rect x="19.6" y="12.5" width="1.8" height="1" fill="#e03030"/><path d="M5.5 15.5H18.5V22.5H5.5Z" fill="#fff" stroke="#9aa0aa"/><path d="M7.5 18.5H16.5M7.5 20.5H16.5" stroke="#b0b4bc" stroke-width="0.8"/></svg>
<div class="sep" style="left:87px;top:5px;height:22px"></div>
<svg style="left:91.5px;top:2.8px" width="25" height="24" viewBox="0 0 25 24"><path d="M12.30 1.70L15.36 8.39L22.67 9.23L17.25 14.21L18.71 21.42L12.30 17.80L5.89 21.42L7.35 14.21L1.93 9.23L9.24 8.39Z" fill="url(#gStar)" stroke="#d8a020" stroke-width="1.8" stroke-linejoin="round"/><path d="M18.5 13.5V22.5M14 18H23" stroke="#1f7a1a" stroke-width="4.2" stroke-linecap="round"/><path d="M18.5 13.8V22.2M14.3 18H22.7" stroke="#4cc83a" stroke-width="2.4" stroke-linecap="round"/></svg>
<svg style="left:119.5px;top:2.8px" width="25" height="24" viewBox="0 0 25 24"><path d="M12.30 1.70L15.36 8.39L22.67 9.23L17.25 14.21L18.71 21.42L12.30 17.80L5.89 21.42L7.35 14.21L1.93 9.23L9.24 8.39Z" fill="#d6d6d6" stroke="#c6c6c6" stroke-width="1.8" stroke-linejoin="round"/><path d="M15.5 15L22.5 22M22.5 15L15.5 22" stroke="#a8a8a8" stroke-width="3.2" stroke-linecap="round"/></svg>
<div class="sep" style="left:149px;top:5px;height:22px"></div>
<svg style="left:153.5px;top:2.5px" width="24" height="24" viewBox="0 0 24 24"><path d="M0.5 2.5H22.5V21Q22.5 22.5 21 22.5H2Q0.5 22.5 0.5 21Z" fill="#fff" stroke="#8e8e92"/><path d="M1 22.9H22" stroke="#b8b8b8" stroke-width="0.8"/><path d="M1 10.5H22M1 14.5H22M1 18.5H22M7.5 6V22M15.5 6V22" stroke="#bcc0e6" stroke-width="1" fill="none"/><rect x="0.5" y="2.5" width="22" height="4" rx="0.8" fill="url(#gHdr)" stroke="#5f74c6" stroke-width="0.9"/><path d="M7.5 2.5V6.5M15.5 2.5V6.5" stroke="#5f74c6" stroke-width="0.8"/><g transform="translate(0 0)"><rect x="0.00" y="0.00" width="1.4" height="1.4" fill="#1010ff"/><rect x="6.60" y="0.00" width="1.4" height="1.4" fill="#1010ff"/><rect x="0.00" y="6.60" width="1.4" height="1.4" fill="#1010ff"/><rect x="6.60" y="6.60" width="1.4" height="1.4" fill="#1010ff"/><rect x="3.30" y="-0.10" width="1.4" height="1.4" fill="#1010ff"/><rect x="3.30" y="6.70" width="1.4" height="1.4" fill="#1010ff"/><rect x="-0.10" y="3.30" width="1.4" height="1.4" fill="#1010ff"/><rect x="6.70" y="3.30" width="1.4" height="1.4" fill="#1010ff"/><path d="M1.6 1.6L6.4 6.4M6.4 1.6L1.6 6.4" stroke="#1010ff" stroke-width="1"/><circle cx="4" cy="4" r="2.05" fill="#b4c4e4" stroke="#1010ff" stroke-width="1.6"/></g></svg>
<div class="selbox" style="left:180px;top:1px;width:28px;height:28px"></div>
<svg style="left:182px;top:2.5px" width="24" height="24" viewBox="0 0 24 24"><path d="M0.5 2.5H22.5V21Q22.5 22.5 21 22.5H2Q0.5 22.5 0.5 21Z" fill="#fff" stroke="#8e8e92"/><path d="M1 22.9H22" stroke="#b8b8b8" stroke-width="0.8"/><path d="M1 10.5H22M1 14.5H22M1 18.5H22M7.5 6V22M15.5 6V22" stroke="#bcc0e6" stroke-width="1" fill="none"/><rect x="0.5" y="2.5" width="22" height="4" rx="0.8" fill="url(#gHdr)" stroke="#5f74c6" stroke-width="0.9"/><path d="M7.5 2.5V6.5M15.5 2.5V6.5" stroke="#5f74c6" stroke-width="0.8"/><g transform="translate(16 0)"><rect x="0.00" y="0.00" width="1.4" height="1.4" fill="#ff1010"/><rect x="6.60" y="0.00" width="1.4" height="1.4" fill="#ff1010"/><rect x="0.00" y="6.60" width="1.4" height="1.4" fill="#ff1010"/><rect x="6.60" y="6.60" width="1.4" height="1.4" fill="#ff1010"/><rect x="3.30" y="-0.10" width="1.4" height="1.4" fill="#ff1010"/><rect x="3.30" y="6.70" width="1.4" height="1.4" fill="#ff1010"/><rect x="-0.10" y="3.30" width="1.4" height="1.4" fill="#ff1010"/><rect x="6.70" y="3.30" width="1.4" height="1.4" fill="#ff1010"/><path d="M1.6 1.6L6.4 6.4M6.4 1.6L1.6 6.4" stroke="#ff1010" stroke-width="1"/><circle cx="4" cy="4" r="2.05" fill="#b4c4e4" stroke="#ff1010" stroke-width="1.6"/></g></svg>
<svg style="left:210px;top:2.5px" width="24" height="24" viewBox="0 0 24 24"><path d="M0.5 2.5H22.5V21Q22.5 22.5 21 22.5H2Q0.5 22.5 0.5 21Z" fill="#fff" stroke="#8e8e92"/><path d="M1 22.9H22" stroke="#b8b8b8" stroke-width="0.8"/><path d="M1 10.5H22M1 14.5H22M1 18.5H22M7.5 6V22M15.5 6V22" stroke="#bcc0e6" stroke-width="1" fill="none"/><rect x="0.5" y="2.5" width="22" height="4" rx="0.8" fill="url(#gHdr)" stroke="#5f74c6" stroke-width="0.9"/><path d="M7.5 2.5V6.5M15.5 2.5V6.5" stroke="#5f74c6" stroke-width="0.8"/><g transform="translate(0 0)"><rect x="0.00" y="0.00" width="1.4" height="1.4" fill="#1010ff"/><rect x="6.60" y="0.00" width="1.4" height="1.4" fill="#1010ff"/><rect x="0.00" y="6.60" width="1.4" height="1.4" fill="#1010ff"/><rect x="6.60" y="6.60" width="1.4" height="1.4" fill="#1010ff"/><rect x="3.30" y="-0.10" width="1.4" height="1.4" fill="#1010ff"/><rect x="3.30" y="6.70" width="1.4" height="1.4" fill="#1010ff"/><rect x="-0.10" y="3.30" width="1.4" height="1.4" fill="#1010ff"/><rect x="6.70" y="3.30" width="1.4" height="1.4" fill="#1010ff"/><path d="M1.6 1.6L6.4 6.4M6.4 1.6L1.6 6.4" stroke="#1010ff" stroke-width="1"/><circle cx="4" cy="4" r="2.05" fill="#b4c4e4" stroke="#1010ff" stroke-width="1.6"/></g><g transform="translate(16 0)"><rect x="0.00" y="0.00" width="1.4" height="1.4" fill="#ff1010"/><rect x="6.60" y="0.00" width="1.4" height="1.4" fill="#ff1010"/><rect x="0.00" y="6.60" width="1.4" height="1.4" fill="#ff1010"/><rect x="6.60" y="6.60" width="1.4" height="1.4" fill="#ff1010"/><rect x="3.30" y="-0.10" width="1.4" height="1.4" fill="#ff1010"/><rect x="3.30" y="6.70" width="1.4" height="1.4" fill="#ff1010"/><rect x="-0.10" y="3.30" width="1.4" height="1.4" fill="#ff1010"/><rect x="6.70" y="3.30" width="1.4" height="1.4" fill="#ff1010"/><path d="M1.6 1.6L6.4 6.4M6.4 1.6L1.6 6.4" stroke="#ff1010" stroke-width="1"/><circle cx="4" cy="4" r="2.05" fill="#b4c4e4" stroke="#ff1010" stroke-width="1.6"/></g></svg>
<div class="sep" style="left:239px;top:5px;height:22px"></div>
<svg style="left:244.8px;top:5.4px" width="24" height="22" viewBox="0 0 24 22"><path d="M6.5 8.5Q12.5 1.2 18.6 3.6Q23.6 7.4 14.6 19.2" fill="none" stroke="#b4b4b4" stroke-width="5.4" stroke-linecap="round"/><path d="M0.4 1.2V13.4H12Z" fill="#c8c8c8" stroke="#b4b4b4" stroke-width="0.7" stroke-linejoin="round"/><path d="M6.5 8.5Q12.5 1.2 18.6 3.6Q23.6 7.4 14.6 19.2" fill="none" stroke="#c8c8c8" stroke-width="4.2" stroke-linecap="round"/></svg>
<div class="sep" style="left:273px;top:5px;height:22px"></div>
<svg style="left:277.6px;top:2.6px" width="25" height="24" viewBox="0 0 25 24"><path d="M1.5 0.5H9.5L14.5 5.5V16.5H1.5Z" fill="#fdfdfd" stroke="#9a9a9a"/><path d="M9.5 0.5V5.5H14.5" fill="none" stroke="#9a9a9a"/><path d="M3.5 3.5H8.0" stroke="#7fa4e8" stroke-width="0.9"/><path d="M3.5 5.5H8.0" stroke="#7fa4e8" stroke-width="0.9"/><path d="M3.5 7.5H12.5" stroke="#7fa4e8" stroke-width="0.9"/><path d="M3.5 9.5H12.5" stroke="#7fa4e8" stroke-width="0.9"/><path d="M3.5 11.5H12.5" stroke="#7fa4e8" stroke-width="0.9"/><path d="M3.5 13.5H12.5" stroke="#7fa4e8" stroke-width="0.9"/><path d="M9.5 6.5H18.5L23.5 11.5V23.5H9.5Z" fill="#fdfdfd" stroke="#9a9a9a"/><path d="M18.5 6.5V11.5H23.5" fill="none" stroke="#9a9a9a"/><path d="M11.5 9.5H17.0" stroke="#3a8af0" stroke-width="0.9"/><path d="M11.5 11.5H17.0" stroke="#3a8af0" stroke-width="0.9"/><path d="M11.5 13.5H21.5" stroke="#3a8af0" stroke-width="0.9"/><path d="M11.5 15.5H21.5" stroke="#3a8af0" stroke-width="0.9"/><path d="M11.5 17.5H21.5" stroke="#3a8af0" stroke-width="0.9"/><path d="M11.5 19.5H21.5" stroke="#3a8af0" stroke-width="0.9"/><path d="M11.5 21.5H21.5" stroke="#3a8af0" stroke-width="0.9"/></svg>
<svg style="left:305.4px;top:2.6px" width="24" height="24" viewBox="0 0 24 24"><rect x="1.5" y="2.5" width="17" height="20" rx="1.5" fill="#cfcfcf" stroke="#b4b4b4"/><rect x="6" y="0.8" width="8" height="4" rx="1" fill="#bdbdbd" stroke="#a8a8a8" stroke-width="0.7"/><path d="M9.5 7.5H17.5L22.5 12.5V22.5H9.5Z" fill="#eaeaea" stroke="#b8b8b8"/><path d="M17.5 7.5V12.5H22.5" fill="none" stroke="#b8b8b8"/><path d="M11.5 10.5H16.0" stroke="#b0b0b0" stroke-width="0.9"/><path d="M11.5 12.5H16.0" stroke="#b0b0b0" stroke-width="0.9"/><path d="M11.5 14.5H20.5" stroke="#b0b0b0" stroke-width="0.9"/><path d="M11.5 16.5H20.5" stroke="#b0b0b0" stroke-width="0.9"/><path d="M11.5 18.5H20.5" stroke="#b0b0b0" stroke-width="0.9"/><path d="M11.5 20.5H20.5" stroke="#b0b0b0" stroke-width="0.9"/></svg>
<div class="sep" style="left:335px;top:5px;height:22px"></div>
<svg style="left:340px;top:2.2px" width="24" height="24" viewBox="0 0 24 24"><rect x="0" y="4.2" width="24" height="5.2" fill="#858585"/><rect x="0" y="15.8" width="24" height="5.2" fill="#858585"/></svg>
<svg style="left:368px;top:2.8px" width="23" height="23" viewBox="0 0 23 23"><rect x="9" y="0" width="5" height="23" fill="#858585"/><rect x="0" y="9" width="23" height="5" fill="#858585"/></svg>
<svg style="left:398.5px;top:5.2px" width="19" height="19" viewBox="0 0 19 19"><path d="M2 2L17 17M17 2L2 17" stroke="#858585" stroke-width="5"/></svg>
<div class="a" style="left:423px;top:4px;width:60px;height:23px;background:#fff;border:1px solid #3c3c3c"></div>
<div class="t" style="left:487px;top:9.8px;font-size:11.5px;color:#0a8a0a">ms</div>
<div class="selbox" style="left:0px;top:32px;width:28px;height:28px"></div>
<svg style="left:2px;top:36px" width="23" height="21" viewBox="0 0 23 21"><rect x="0.5" y="0.5" width="22" height="20" rx="1.3" fill="url(#gPane)" stroke="#7c7c7c"/><rect x="0.9" y="0.9" width="21.2" height="3.2" rx="0.8" fill="url(#gHdr)" stroke="#6a80d0" stroke-width="0.7"/></svg>
<svg style="left:30.5px;top:36px" width="23" height="21" viewBox="0 0 23 21"><rect x="0.5" y="0.5" width="22" height="9" rx="1.3" fill="url(#gPane)" stroke="#7c7c7c"/><rect x="0.9" y="0.9" width="21.2" height="3.2" rx="0.8" fill="url(#gHdr)" stroke="#6a80d0" stroke-width="0.7"/><rect x="0.5" y="10.5" width="22" height="10" rx="1.3" fill="url(#gPane)" stroke="#7c7c7c"/><rect x="0.9" y="10.9" width="21.2" height="3.2" rx="0.8" fill="url(#gHdr)" stroke="#6a80d0" stroke-width="0.7"/></svg>
<svg style="left:58px;top:36px" width="23" height="21" viewBox="0 0 23 21"><rect x="0.5" y="0.5" width="11" height="20" rx="1.3" fill="url(#gPane)" stroke="#7c7c7c"/><rect x="0.9" y="0.9" width="10.2" height="3.2" rx="0.8" fill="url(#gHdr)" stroke="#6a80d0" stroke-width="0.7"/><rect x="11.5" y="0.5" width="11" height="20" rx="1.3" fill="url(#gPane)" stroke="#7c7c7c"/><rect x="11.9" y="0.9" width="10.2" height="3.2" rx="0.8" fill="url(#gHdr)" stroke="#6a80d0" stroke-width="0.7"/></svg>
<div class="sep" style="left:87px;top:35px;height:22px"></div>
<div class="selbox" style="left:90px;top:32px;width:28px;height:28px"></div>
<svg style="left:92.5px;top:36px" width="23" height="20" viewBox="0 0 23 20"><rect x="0.5" y="0.5" width="22" height="18.5" fill="#fff" stroke="#8a96c8" stroke-width="0.8"/><rect x="0.5" y="0.5" width="22" height="3.6" fill="url(#gHdr)"/><rect x="0.5" y="4" width="7" height="15" fill="#8ea4e6"/><path d="M0.5 4.2H22.5M0.5 7.9H22.5M0.5 11.6H22.5M0.5 15.3H22.5M7.5 0.5V19M15 0.5V19" stroke="#c4cdf0" stroke-width="0.9" fill="none"/><path d="M0.5 7.9H7.5M0.5 11.6H7.5M0.5 15.3H7.5" stroke="#6f86d6" stroke-width="0.9"/></svg>
<svg style="left:122px;top:33.5px" width="21" height="24" viewBox="0 0 21 24"><path d="M0.3 12.3L10.8 1.8Q15 -1.2 18.2 1.8L20.7 11.8L11.4 24Z" fill="url(#gSurf)"/></svg>
<svg style="left:148.5px;top:36px" width="23" height="21" viewBox="0 0 23 21"><path d="M0.6 0V20.4H22.6" fill="none" stroke="#111" stroke-width="1.1"/><path d="M2.5 13.5L6 10.5L10 14.5L14 8.5L17.5 10.5L20.5 6" fill="none" stroke="#8fb4ec" stroke-width="1"/><path d="M2.5 11.5L7.5 5.5L12 15.5L16.5 7.5L19.5 3.2" fill="none" stroke="#2a5fc4" stroke-width="1.1"/></svg>
<svg style="left:201px;top:35.5px" width="22" height="22" viewBox="0 0 22 22"><text transform="translate(9.6 9) scale(1.16 1)" x="0" y="0" font-family="Liberation Serif, serif" font-weight="bold" font-size="13.8" fill="#3f8cd8" stroke="#3f8cd8" stroke-width="0.3">.0</text><text transform="translate(0.8 20.8) scale(1.16 1)" x="0" y="0" font-family="Liberation Serif, serif" font-weight="bold" font-size="13.8" fill="#3f8cd8" stroke="#3f8cd8" stroke-width="0.3">.00</text><path d="M0 4.8L4.4 1.6V3.4H9V6.2H4.4V8Z" fill="#3f8cd8"/></svg>
<svg style="left:229px;top:35.5px" width="22" height="22" viewBox="0 0 22 22"><text transform="translate(0.6 9) scale(1.16 1)" x="0" y="0" font-family="Liberation Serif, serif" font-weight="bold" font-size="13.8" fill="#3f8cd8" stroke="#3f8cd8" stroke-width="0.3">.00</text><text transform="translate(9.4 20.8) scale(1.16 1)" x="0" y="0" font-family="Liberation Serif, serif" font-weight="bold" font-size="13.8" fill="#3f8cd8" stroke="#3f8cd8" stroke-width="0.3">.0</text><path d="M9 16.6L4.6 13.4V15.2H0V18H4.6V19.8Z" fill="#3f8cd8"/></svg>
<svg style="left:278.5px;top:34.5px" width="23" height="23" viewBox="0 0 23 23"><path d="M1 9.5L11 0.5Q15 -1 17.5 2L22.5 14L12 23L7.5 22Z" fill="#d2d2d2"/><path d="M0.8 6V0.8H5.6M17.4 0.8H22.2V6M22.2 17V22.2H17.4M5.6 22.2H0.8V17" fill="none" stroke="#8f8f8f" stroke-width="1.5"/></svg>
<svg style="left:306.5px;top:34.5px" width="23" height="23" viewBox="0 0 23 23"><path d="M2.5 11L13 0.8Q17 -0.6 19 2.4L20.8 14L13 23Z" fill="#d2d2d2"/><path d="M1 0V23M21.6 0V23" stroke="#8f8f8f" stroke-width="1.6"/></svg>
<svg style="left:335.5px;top:34.5px" width="21" height="23" viewBox="0 0 21 23"><path d="M0.5 10L9.5 1Q13 -0.5 15.5 2.5L20.5 14L11 23L6 21.5Z" fill="#d2d2d2"/><path d="M0 1.4H21M0 21.8H21" stroke="#8f8f8f" stroke-width="1.6"/></svg>
<svg style="left:362.5px;top:34.5px" width="23" height="23" viewBox="0 0 23 23"><rect x="4" y="4" width="15" height="15" fill="#d6d6d6" stroke="#8f8f8f" stroke-width="1.4"/><path d="M4 4L19 19M19 4L4 19" stroke="#8f8f8f" stroke-width="1"/><path d="M0.8 5V0.8H5M18 0.8H22.2V5M22.2 18V22.2H18M5 22.2H0.8V18" fill="none" stroke="#8f8f8f" stroke-width="1.5"/></svg>
<svg style="left:391px;top:34.5px" width="23" height="23" viewBox="0 0 23 23"><rect x="4.5" y="4" width="14" height="15" fill="#dcdcdc" stroke="#8f8f8f" stroke-width="1.4"/><rect x="5.2" y="4.7" width="5" height="13.6" fill="#bdbdbd"/><path d="M1 0V23M22 0V23" stroke="#8f8f8f" stroke-width="1.6"/></svg>
<svg style="left:419.5px;top:34.5px" width="21" height="23" viewBox="0 0 21 23"><rect x="3.5" y="4.5" width="14" height="14" fill="#dcdcdc" stroke="#8f8f8f" stroke-width="1.4"/><rect x="4.2" y="5.2" width="12.6" height="5" fill="#bdbdbd"/><path d="M0 1H21M0 22H21" stroke="#8f8f8f" stroke-width="1.6"/></svg>
<div class="t" id="xtitle">Manifold Vacuum (kPa)</div>
<div class="t" id="ytitle">Ignition Volts (V)</div>
<div class="grid">
<div class="gr hd"><span class="rh"></span><span class="ch"><i>0</i></span><span class="ch"><i>5</i></span><span class="ch"><i>10</i></span><span class="ch"><i>15</i></span><span class="ch"><i>20</i></span><span class="ch"><i>25</i></span><span class="ch"><i>30</i></span><span class="ch"><i>35</i></span><span class="ch"><i>40</i></span><span class="ch"><i>45</i></span><span class="ch"><i>50</i></span><span class="ch"><i>55</i></span><span class="ch"><i>60</i></span><span class="ch"><i>65</i></span><span class="ch"><i>70</i></span><span class="ch"><i>75</i></span><span class="ch"><i>80</i></span></div>
<div class="gr" style="--bg:#8a8af6"><span class="rh"><i>4.5</i></span><span class="c"><i>0.0000</i></span><span class="c"><i>0.0000</i></span><span class="c"><i>0.0000</i></span><span class="c"><i>0.0000</i></span><span class="c"><i>0.0000</i></span><span class="c"><i>0.0000</i></span><span class="c"><i>0.0000</i></span><span class="c"><i>0.0000</i></span><span class="c"><i>0.0000</i></span><span class="c"><i>0.0000</i></span><span class="c"><i>0.0000</i></span><span class="c"><i>0.0000</i></span><span class="c"><i>0.0000</i></span><span class="c"><i>0.0000</i></span><span class="c"><i>0.0000</i></span><span class="c"><i>0.0000</i></span><span class="c sel"><i>0.0000</i></span></div>
<div class="gr" style="--bg:#8a8af6"><span class="rh"><i>5.0</i></span><span class="c"><i>0.0000</i></span><span class="c"><i>0.0000</i></span><span class="c"><i>0.0000</i></span><span class="c"><i>0.0000</i></span><span class="c"><i>0.0000</i></span><span class="c"><i>0.0000</i></span><span class="c"><i>0.0000</i></span><span class="c"><i>0.0000</i></span><span class="c"><i>0.0000</i></span><span class="c"><i>0.0000</i></span><span class="c"><i>0.0000</i></span><span class="c"><i>0.0000</i></span><span class="c"><i>0.0000</i></span><span class="c"><i>0.0000</i></span><span class="c"><i>0.0000</i></span><span class="c"><i>0.0000</i></span><span class="c"><i>0.0000</i></span></div>
<div class="gr" style="--bg:#8a8af6"><span class="rh"><i>5.5</i></span><span class="c"><i>0.0000</i></span><span class="c"><i>0.0000</i></span><span class="c"><i>0.0000</i></span><span class="c"><i>0.0000</i></span><span class="c"><i>0.0000</i></span><span class="c"><i>0.0000</i></span><span class="c"><i>0.0000</i></span><span class="c"><i>0.0000</i></span><span class="c"><i>0.0000</i></span><span class="c"><i>0.0000</i></span><span class="c"><i>0.0000</i></span><span class="c"><i>0.0000</i></span><span class="c"><i>0.0000</i></span><span class="c"><i>0.0000</i></span><span class="c"><i>0.0000</i></span><span class="c"><i>0.0000</i></span><span class="c"><i>0.0000</i></span></div>
<div class="gr" style="--bg:#d9d9ff"><span class="rh"><i>6.0</i></span><span class="c"><i>3.4943</i></span><span class="c"><i>3.4943</i></span><span class="c"><i>3.4943</i></span><span class="c"><i>3.4943</i></span><span class="c"><i>3.4943</i></span><span class="c"><i>3.4943</i></span><span class="c"><i>3.4943</i></span><span class="c"><i>3.4943</i></span><span class="c"><i>3.4943</i></span><span class="c"><i>3.4943</i></span><span class="c"><i>3.4943</i></span><span class="c"><i>3.4943</i></span><span class="c"><i>3.4943</i></span><span class="c"><i>3.4943</i></span><span class="c"><i>3.4943</i></span><span class="c"><i>3.4943</i></span><span class="c"><i>3.4943</i></span></div>
<div class="gr" style="--bg:#ffcccc"><span class="rh"><i>6.5</i></span><span class="c"><i>3.4180</i></span><span class="c"><i>3.4180</i></span><span class="c"><i>3.4180</i></span><span class="c"><i>3.4180</i></span><span class="c"><i>3.4180</i></span><span class="c"><i>3.4180</i></span><span class="c"><i>3.4180</i></span><span class="c"><i>3.4180</i></span><span class="c"><i>3.4180</i></span><span class="c"><i>3.4180</i></span><span class="c"><i>3.4180</i></span><span class="c"><i>3.4180</i></span><span class="c"><i>3.4180</i></span><span class="c"><i>3.4180</i></span><span class="c"><i>3.4180</i></span><span class="c"><i>3.4180</i></span><span class="c"><i>3.4180</i></span></div>
<div class="gr" style="--bg:#ffb3b3"><span class="rh"><i>7.0</i></span><span class="c"><i>3.3570</i></span><span class="c"><i>3.3570</i></span><span class="c"><i>3.3570</i></span><span class="c"><i>3.3570</i></span><span class="c"><i>3.3570</i></span><span class="c"><i>3.3570</i></span><span class="c"><i>3.3570</i></span><span class="c"><i>3.3570</i></span><span class="c"><i>3.3570</i></span><span class="c"><i>3.3570</i></span><span class="c"><i>3.3570</i></span><span class="c"><i>3.3570</i></span><span class="c"><i>3.3570</i></span><span class="c"><i>3.3570</i></span><span class="c"><i>3.3570</i></span><span class="c"><i>3.3570</i></span><span class="c"><i>3.3570</i></span></div>
<div class="gr" style="--bg:#ffaaaa"><span class="rh"><i>7.5</i></span><span class="c"><i>3.2807</i></span><span class="c"><i>3.2807</i></span><span class="c"><i>3.2807</i></span><span class="c"><i>3.2807</i></span><span class="c"><i>3.2807</i></span><span class="c"><i>3.2807</i></span><span class="c"><i>3.2807</i></span><span class="c"><i>3.2807</i></span><span class="c"><i>3.2807</i></span><span class="c"><i>3.2807</i></span><span class="c"><i>3.2807</i></span><span class="c"><i>3.2807</i></span><span class="c"><i>3.2807</i></span><span class="c"><i>3.2807</i></span><span class="c"><i>3.2807</i></span><span class="c"><i>3.2807</i></span><span class="c"><i>3.2807</i></span></div>
<div class="gr" style="--bg:#ff9f9f"><span class="rh"><i>8.0</i></span><span class="c"><i>3.2044</i></span><span class="c"><i>3.2044</i></span><span class="c"><i>3.2044</i></span><span class="c"><i>3.2044</i></span><span class="c"><i>3.2044</i></span><span class="c"><i>3.2044</i></span><span class="c"><i>3.2044</i></span><span class="c"><i>3.2044</i></span><span class="c"><i>3.2044</i></span><span class="c"><i>3.2044</i></span><span class="c"><i>3.2044</i></span><span class="c"><i>3.2044</i></span><span class="c"><i>3.2044</i></span><span class="c"><i>3.2044</i></span><span class="c"><i>3.2044</i></span><span class="c"><i>3.2044</i></span><span class="c"><i>3.2044</i></span></div>
<div class="gr" style="--bg:#ffa6a6"><span class="rh"><i>8.5</i></span><span class="c"><i>2.8992</i></span><span class="c"><i>2.8992</i></span><span class="c"><i>2.8992</i></span><span class="c"><i>2.8992</i></span><span class="c"><i>2.8992</i></span><span class="c"><i>2.8992</i></span><span class="c"><i>2.8992</i></span><span class="c"><i>2.8992</i></span><span class="c"><i>2.8992</i></span><span class="c"><i>2.8992</i></span><span class="c"><i>2.8992</i></span><span class="c"><i>2.8992</i></span><span class="c"><i>2.8992</i></span><span class="c"><i>2.8992</i></span><span class="c"><i>2.8992</i></span><span class="c"><i>2.8992</i></span><span class="c"><i>2.8992</i></span></div>
<div class="gr" style="--bg:#ffabab"><span class="rh"><i>9.0</i></span><span class="c"><i>2.5788</i></span><span class="c"><i>2.5788</i></span><span class="c"><i>2.5788</i></span><span class="c"><i>2.5788</i></span><span class="c"><i>2.5788</i></span><span class="c"><i>2.5788</i></span><span class="c"><i>2.5788</i></span><span class="c"><i>2.5788</i></span><span class="c"><i>2.5788</i></span><span class="c"><i>2.5788</i></span><span class="c"><i>2.5788</i></span><span class="c"><i>2.5788</i></span><span class="c"><i>2.5788</i></span><span class="c"><i>2.5788</i></span><span class="c"><i>2.5788</i></span><span class="c"><i>2.5788</i></span><span class="c"><i>2.5788</i></span></div>
<div class="gr" style="--bg:#ffb0b0"><span class="rh"><i>9.5</i></span><span class="c"><i>2.2583</i></span><span class="c"><i>2.2583</i></span><span class="c"><i>2.2583</i></span><span class="c"><i>2.2583</i></span><span class="c"><i>2.2583</i></span><span class="c"><i>2.2583</i></span><span class="c"><i>2.2583</i></span><span class="c"><i>2.2583</i></span><span class="c"><i>2.2583</i></span><span class="c"><i>2.2583</i></span><span class="c"><i>2.2583</i></span><span class="c"><i>2.2583</i></span><span class="c"><i>2.2583</i></span><span class="c"><i>2.2583</i></span><span class="c"><i>2.2583</i></span><span class="c"><i>2.2583</i></span><span class="c"><i>2.2583</i></span></div>
<div class="gr" style="--bg:#ffb4b4"><span class="rh"><i>10.0</i></span><span class="c"><i>1.9532</i></span><span class="c"><i>1.9532</i></span><span class="c"><i>1.9532</i></span><span class="c"><i>1.9532</i></span><span class="c"><i>1.9532</i></span><span class="c"><i>1.9532</i></span><span class="c"><i>1.9532</i></span><span class="c"><i>1.9532</i></span><span class="c"><i>1.9532</i></span><span class="c"><i>1.9532</i></span><span class="c"><i>1.9532</i></span><span class="c"><i>1.9532</i></span><span class="c"><i>1.9532</i></span><span class="c"><i>1.9532</i></span><span class="c"><i>1.9532</i></span><span class="c"><i>1.9532</i></span><span class="c"><i>1.9532</i></span></div>
<div class="gr" style="--bg:#ffb6b6"><span class="rh"><i>10.5</i></span><span class="c"><i>1.8158</i></span><span class="c"><i>1.8158</i></span><span class="c"><i>1.8158</i></span><span class="c"><i>1.8158</i></span><span class="c"><i>1.8158</i></span><span class="c"><i>1.8158</i></span><span class="c"><i>1.8158</i></span><span class="c"><i>1.8158</i></span><span class="c"><i>1.8158</i></span><span class="c"><i>1.8158</i></span><span class="c"><i>1.8158</i></span><span class="c"><i>1.8158</i></span><span class="c"><i>1.8158</i></span><span class="c"><i>1.8158</i></span><span class="c"><i>1.8158</i></span><span class="c"><i>1.8158</i></span><span class="c"><i>1.8158</i></span></div>
<div class="gr" style="--bg:#ffb7b7"><span class="rh"><i>11.0</i></span><span class="c"><i>1.6632</i></span><span class="c"><i>1.6632</i></span><span class="c"><i>1.6632</i></span><span class="c"><i>1.6632</i></span><span class="c"><i>1.6632</i></span><span class="c"><i>1.6632</i></span><span class="c"><i>1.6632</i></span><span class="c"><i>1.6632</i></span><span class="c"><i>1.6632</i></span><span class="c"><i>1.6632</i></span><span class="c"><i>1.6632</i></span><span class="c"><i>1.6632</i></span><span class="c"><i>1.6632</i></span><span class="c"><i>1.6632</i></span><span class="c"><i>1.6632</i></span><span class="c"><i>1.6632</i></span><span class="c"><i>1.6632</i></span></div>
<div class="gr" style="--bg:#ffb9b9"><span class="rh"><i>11.5</i></span><span class="c"><i>1.5106</i></span><span class="c"><i>1.5106</i></span><span class="c"><i>1.5106</i></span><span class="c"><i>1.5106</i></span><span class="c"><i>1.5106</i></span><span class="c"><i>1.5106</i></span><span class="c"><i>1.5106</i></span><span class="c"><i>1.5106</i></span><span class="c"><i>1.5106</i></span><span class="c"><i>1.5106</i></span><span class="c"><i>1.5106</i></span><span class="c"><i>1.5106</i></span><span class="c"><i>1.5106</i></span><span class="c"><i>1.5106</i></span><span class="c"><i>1.5106</i></span><span class="c"><i>1.5106</i></span><span class="c"><i>1.5106</i></span></div>
<div class="gr" style="--bg:#ffbaba"><span class="rh"><i>12.0</i></span><span class="c"><i>1.3733</i></span><span class="c"><i>1.3733</i></span><span class="c"><i>1.3733</i></span><span class="c"><i>1.3733</i></span><span class="c"><i>1.3733</i></span><span class="c"><i>1.3733</i></span><span class="c"><i>1.3733</i></span><span class="c"><i>1.3733</i></span><span class="c"><i>1.3733</i></span><span class="c"><i>1.3733</i></span><span class="c"><i>1.3733</i></span><span class="c"><i>1.3733</i></span><span class="c"><i>1.3733</i></span><span class="c"><i>1.3733</i></span><span class="c"><i>1.3733</i></span><span class="c"><i>1.3733</i></span><span class="c"><i>1.3733</i></span></div>
<div class="gr" style="--bg:#ffbbbb"><span class="rh"><i>12.5</i></span><span class="c"><i>1.2970</i></span><span class="c"><i>1.2970</i></span><span class="c"><i>1.2970</i></span><span class="c"><i>1.2970</i></span><span class="c"><i>1.2970</i></span><span class="c"><i>1.2970</i></span><span class="c"><i>1.2970</i></span><span class="c"><i>1.2970</i></span><span class="c"><i>1.2970</i></span><span class="c"><i>1.2970</i></span><span class="c"><i>1.2970</i></span><span class="c"><i>1.2970</i></span><span class="c"><i>1.2970</i></span><span class="c"><i>1.2970</i></span><span class="c"><i>1.2970</i></span><span class="c"><i>1.2970</i></span><span class="c"><i>1.2970</i></span></div>
<div class="gr" style="--bg:#ffbcbc"><span class="rh"><i>13.0</i></span><span class="c"><i>1.2207</i></span><span class="c"><i>1.2207</i></span><span class="c"><i>1.2207</i></span><span class="c"><i>1.2207</i></span><span class="c"><i>1.2207</i></span><span class="c"><i>1.2207</i></span><span class="c"><i>1.2207</i></span><span class="c"><i>1.2207</i></span><span class="c"><i>1.2207</i></span><span class="c"><i>1.2207</i></span><span class="c"><i>1.2207</i></span><span class="c"><i>1.2207</i></span><span class="c"><i>1.2207</i></span><span class="c"><i>1.2207</i></span><span class="c"><i>1.2207</i></span><span class="c"><i>1.2207</i></span><span class="c"><i>1.2207</i></span></div>
<div class="gr" style="--bg:#ffbdbd"><span class="rh"><i>13.5</i></span><span class="c"><i>1.1444</i></span><span class="c"><i>1.1444</i></span><span class="c"><i>1.1444</i></span><span class="c"><i>1.1444</i></span><span class="c"><i>1.1444</i></span><span class="c"><i>1.1444</i></span><span class="c"><i>1.1444</i></span><span class="c"><i>1.1444</i></span><span class="c"><i>1.1444</i></span><span class="c"><i>1.1444</i></span><span class="c"><i>1.1444</i></span><span class="c"><i>1.1444</i></span><span class="c"><i>1.1444</i></span><span class="c"><i>1.1444</i></span><span class="c"><i>1.1444</i></span><span class="c"><i>1.1444</i></span><span class="c"><i>1.1444</i></span></div>
<div class="gr" style="--bg:#ffbdbd"><span class="rh"><i>14.0</i></span><span class="c"><i>1.0681</i></span><span class="c"><i>1.0681</i></span><span class="c"><i>1.0681</i></span><span class="c"><i>1.0681</i></span><span class="c"><i>1.0681</i></span><span class="c"><i>1.0681</i></span><span class="c"><i>1.0681</i></span><span class="c"><i>1.0681</i></span><span class="c"><i>1.0681</i></span><span class="c"><i>1.0681</i></span><span class="c"><i>1.0681</i></span><span class="c"><i>1.0681</i></span><span class="c"><i>1.0681</i></span><span class="c"><i>1.0681</i></span><span class="c"><i>1.0681</i></span><span class="c"><i>1.0681</i></span><span class="c"><i>1.0681</i></span></div>
<div class="gr" style="--bg:#ffbebe"><span class="rh"><i>14.5</i></span><span class="c"><i>1.0071</i></span><span class="c"><i>1.0071</i></span><span class="c"><i>1.0071</i></span><span class="c"><i>1.0071</i></span><span class="c"><i>1.0071</i></span><span class="c"><i>1.0071</i></span><span class="c"><i>1.0071</i></span><span class="c"><i>1.0071</i></span><span class="c"><i>1.0071</i></span><span class="c"><i>1.0071</i></span><span class="c"><i>1.0071</i></span><span class="c"><i>1.0071</i></span><span class="c"><i>1.0071</i></span><span class="c"><i>1.0071</i></span><span class="c"><i>1.0071</i></span><span class="c"><i>1.0071</i></span><span class="c"><i>1.0071</i></span></div>
<div class="gr" style="--bg:#ffbebe"><span class="rh"><i>15.0</i></span><span class="c"><i>0.9461</i></span><span class="c"><i>0.9461</i></span><span class="c"><i>0.9461</i></span><span class="c"><i>0.9461</i></span><span class="c"><i>0.9461</i></span><span class="c"><i>0.9461</i></span><span class="c"><i>0.9461</i></span><span class="c"><i>0.9461</i></span><span class="c"><i>0.9461</i></span><span class="c"><i>0.9461</i></span><span class="c"><i>0.9461</i></span><span class="c"><i>0.9461</i></span><span class="c"><i>0.9461</i></span><span class="c"><i>0.9461</i></span><span class="c"><i>0.9461</i></span><span class="c"><i>0.9461</i></span><span class="c"><i>0.9461</i></span></div>
<div class="gr" style="--bg:#ffbfbf"><span class="rh"><i>15.5</i></span><span class="c"><i>0.8850</i></span><span class="c"><i>0.8850</i></span><span class="c"><i>0.8850</i></span><span class="c"><i>0.8850</i></span><span class="c"><i>0.8850</i></span><span class="c"><i>0.8850</i></span><span class="c"><i>0.8850</i></span><span class="c"><i>0.8850</i></span><span class="c"><i>0.8850</i></span><span class="c"><i>0.8850</i></span><span class="c"><i>0.8850</i></span><span class="c"><i>0.8850</i></span><span class="c"><i>0.8850</i></span><span class="c"><i>0.8850</i></span><span class="c"><i>0.8850</i></span><span class="c"><i>0.8850</i></span><span class="c"><i>0.8850</i></span></div>
<div class="gr" style="--bg:#ffbfbf"><span class="rh"><i>16.0</i></span><span class="c"><i>0.8240</i></span><span class="c"><i>0.8240</i></span><span class="c"><i>0.8240</i></span><span class="c"><i>0.8240</i></span><span class="c"><i>0.8240</i></span><span class="c"><i>0.8240</i></span><span class="c"><i>0.8240</i></span><span class="c"><i>0.8240</i></span><span class="c"><i>0.8240</i></span><span class="c"><i>0.8240</i></span><span class="c"><i>0.8240</i></span><span class="c"><i>0.8240</i></span><span class="c"><i>0.8240</i></span><span class="c"><i>0.8240</i></span><span class="c"><i>0.8240</i></span><span class="c"><i>0.8240</i></span><span class="c"><i>0.8240</i></span></div>
<div class="gr" style="--bg:#ffc0c0"><span class="rh"><i>16.5</i></span><span class="c"><i>0.7935</i></span><span class="c"><i>0.7935</i></span><span class="c"><i>0.7935</i></span><span class="c"><i>0.7935</i></span><span class="c"><i>0.7935</i></span><span class="c"><i>0.7935</i></span><span class="c"><i>0.7935</i></span><span class="c"><i>0.7935</i></span><span class="c"><i>0.7935</i></span><span class="c"><i>0.7935</i></span><span class="c"><i>0.7935</i></span><span class="c"><i>0.7935</i></span><span class="c"><i>0.7935</i></span><span class="c"><i>0.7935</i></span><span class="c"><i>0.7935</i></span><span class="c"><i>0.7935</i></span><span class="c"><i>0.7935</i></span></div>
<div class="gr" style="--bg:#ffc0c0"><span class="rh"><i>17.0</i></span><span class="c"><i>0.7782</i></span><span class="c"><i>0.7782</i></span><span class="c"><i>0.7782</i></span><span class="c"><i>0.7782</i></span><span class="c"><i>0.7782</i></span><span class="c"><i>0.7782</i></span><span class="c"><i>0.7782</i></span><span class="c"><i>0.7782</i></span><span class="c"><i>0.7782</i></span><span class="c"><i>0.7782</i></span><span class="c"><i>0.7782</i></span><span class="c"><i>0.7782</i></span><span class="c"><i>0.7782</i></span><span class="c"><i>0.7782</i></span><span class="c"><i>0.7782</i></span><span class="c"><i>0.7782</i></span><span class="c"><i>0.7782</i></span></div>
<div class="gr" style="--bg:#ffc0c0"><span class="rh"><i>17.5</i></span><span class="c"><i>0.7782</i></span><span class="c"><i>0.7782</i></span><span class="c"><i>0.7782</i></span><span class="c"><i>0.7782</i></span><span class="c"><i>0.7782</i></span><span class="c"><i>0.7782</i></span><span class="c"><i>0.7782</i></span><span class="c"><i>0.7782</i></span><span class="c"><i>0.7782</i></span><span class="c"><i>0.7782</i></span><span class="c"><i>0.7782</i></span><span class="c"><i>0.7782</i></span><span class="c"><i>0.7782</i></span><span class="c"><i>0.7782</i></span><span class="c"><i>0.7782</i></span><span class="c"><i>0.7782</i></span><span class="c"><i>0.7782</i></span></div>
<div class="gr" style="--bg:#ffc0c0"><span class="rh"><i>18.0</i></span><span class="c"><i>0.7782</i></span><span class="c"><i>0.7782</i></span><span class="c"><i>0.7782</i></span><span class="c"><i>0.7782</i></span><span class="c"><i>0.7782</i></span><span class="c"><i>0.7782</i></span><span class="c"><i>0.7782</i></span><span class="c"><i>0.7782</i></span><span class="c"><i>0.7782</i></span><span class="c"><i>0.7782</i></span><span class="c"><i>0.7782</i></span><span class="c"><i>0.7782</i></span><span class="c"><i>0.7782</i></span><span class="c"><i>0.7782</i></span><span class="c"><i>0.7782</i></span><span class="c"><i>0.7782</i></span><span class="c"><i>0.7782</i></span></div>
</div></div>
</div>
<div class="a" style="left:0;top:726px;width:1366px;height:2px;background:linear-gradient(#e4e4e4 0,#e4e4e4 1px,#fafafa 1px)"></div>
<div id="taskbar" class="a">
<svg style="left:16px;top:12px" width="16" height="16" viewBox="0 0 17 17"><path d="M0 2.4L7 1.3V8H0ZM8 1.15L16.6 0V8H8ZM0 9H7V15.7L0 14.6ZM8 9H16.6V17L8 15.85Z" fill="#000"/></svg>
<div id="search" class="a">
<svg style="left:11px;top:10.2px" width="18" height="18" viewBox="0 0 18 18"><circle cx="10.8" cy="6.2" r="5.3" fill="none" stroke="#1a1a1a" stroke-width="1.05"/><path d="M7 10L0.6 16.4" stroke="#1a1a1a" stroke-width="1.2"/></svg>
<div class="t" id="srch" style="left:39px;top:11px;font-size:15px;color:#3a3a3a">Type here to search</div>
</div>
<svg style="left:351px;top:12px" width="18" height="15" viewBox="0 0 18 15"><path d="M1.5 0V1.5H11.5V0M1.5 3.5H11.5V9.5H1.5ZM1.5 15V12.5H11.5V15" fill="none" stroke="#0a0a0a" stroke-width="1"/><path d="M15.5 0V4M15.5 8V15" stroke="#0a0a0a" stroke-width="1"/><rect x="14.3" y="4.3" width="2.5" height="2.5" fill="#0a0a0a"/></svg>
<svg style="left:398.6px;top:7.4px" width="25" height="25" viewBox="0 0 25 25"><path d="M12.4 0.6Q20.6 0.6 23.6 7.6Q25.2 12.4 22.4 15.4Q19.4 18 15.4 16.6Q17.6 14.2 16.6 11.4Q15.2 8.2 11 8.4Q6.4 8.8 3.4 13.2Q1.6 16 1.2 13.8Q0.2 5.6 7.4 1.8Q9.8 0.6 12.4 0.6Z" fill="url(#gEdge1)"/><path d="M0.8 12.6Q2.6 7 8.8 7Q13.4 7.2 15.4 10.6Q10.2 10 9.4 14.8Q9.2 19.6 14.4 21.8Q18.4 23 22.2 20.2Q18.6 25.4 11.6 24.6Q1.4 22.8 0.8 12.6Z" fill="url(#gEdge2)"/><path d="M9.4 14.8Q9.2 19.6 14.4 21.8Q18.4 23 22.2 20.2Q19.6 22.4 16 21.4Q10.8 19.6 10.4 14.2Z" fill="#0e3f86" opacity="0.55"/></svg>
<svg style="left:448.6px;top:10.4px" width="23" height="19" viewBox="0 0 23 19"><path d="M0.5 1.5Q0.5 0.5 1.5 0.5H8L10 2.5H21Q22 2.5 22 3.5V5H0.5Z" fill="#e8a814"/><rect x="0.5" y="3.6" width="21.8" height="14.6" rx="0.8" fill="#ffd75e"/><path d="M0.5 5.2H22.3" stroke="#fff0b0" stroke-width="0.8"/><path d="M5 18.2V10.2H17.6V18.2H14.4V13.6H8.2V18.2Z" fill="#3a94e0"/><path d="M5 10.2H17.6V12H5Z" fill="#2a7cd0"/></svg>
<div class="a ul" style="left:440px;width:40px"></div>
<svg style="left:496.6px;top:8px" width="24" height="24" viewBox="0 0 24 24"><path d="M7 6V3.2Q7 1 9.2 1H14.8Q17 1 17 3.2V6" fill="none" stroke="#2c9cf0" stroke-width="1.7"/><path d="M1 6.5Q1 5.5 2 5.5H22Q23 5.5 23 6.5V20.5Q23 23.5 20 23.5H4Q1 23.5 1 20.5Z" fill="url(#gStore)"/><rect x="7.2" y="9.6" width="4.3" height="4.3" fill="#f25022"/><rect x="12.5" y="9.6" width="4.3" height="4.3" fill="#7fba00"/><rect x="7.2" y="14.9" width="4.3" height="4.3" fill="#00a4ef"/><rect x="12.5" y="14.9" width="4.3" height="4.3" fill="#ffb900"/></svg>
<svg style="left:545.8px;top:8.4px" width="24" height="24" viewBox="0 0 24 24"><ellipse cx="12" cy="12" rx="11.4" ry="11.8" fill="url(#gOpera)"/><ellipse cx="11.6" cy="12" rx="5.3" ry="9.2" fill="#d4d4d4"/></svg>
<div class="a ul" style="left:538px;width:40px"></div>
<div class="a" style="left:583px;top:0;width:48px;height:40px;background:#efefef"></div>
<div class="a ul" style="left:583px;width:48px"></div>
<svg style="left:595.2px;top:8px" width="24" height="24" viewBox="0 0 24 24"><path d="M1.6 19.4L13 8.4Q11.8 4.4 14.8 1.8Q17.6 -0.2 21 1L17 4.8L17.8 7L20.2 7.8L23.6 4Q24.4 7.4 22.2 10Q19.4 12.6 15.8 11.4L4.8 22.6Q3.2 23.8 1.8 22.4Q0.6 21 1.6 19.4Z" fill="url(#gWr)" stroke="#7c7c7c" stroke-width="0.9"/><circle cx="3.4" cy="21" r="0.9" fill="#fff" stroke="#8a8a8a" stroke-width="0.5"/></svg>
<svg style="left:1158.5px;top:15.8px" width="13" height="8" viewBox="0 0 13 8"><path d="M0.8 7L6.4 1.2L12 7" fill="none" stroke="#111" stroke-width="1.2"/></svg>
<svg style="left:1180.4px;top:14px" width="17" height="12" viewBox="0 0 17 12"><rect x="4.6" y="1.6" width="10.4" height="8" fill="none" stroke="#111" stroke-width="1.1"/><rect x="6" y="3" width="7.6" height="5.2" fill="#111"/><rect x="15.4" y="4" width="1.3" height="3.2" fill="#111"/><path d="M1.4 0.4V2.4M3.6 0.4V2.4" stroke="#111" stroke-width="0.9"/><path d="M0.6 2.6H4.4V4.4Q4.4 6 2.5 6Q0.6 6 0.6 4.4Z" fill="#111"/><path d="M2.5 6V8.6Q2.5 10.4 4.6 10" fill="none" stroke="#111" stroke-width="0.9"/></svg>
<svg style="left:1207.6px;top:14px" width="14" height="14" viewBox="0 0 14 14"><path d="M0.8 12.4Q1.4 3.6 12.6 0.8" fill="none" stroke="#555" stroke-width="1"/><path d="M4 12.8Q4.6 6.6 12.8 4.2" fill="none" stroke="#333" stroke-width="1"/><path d="M7.2 13Q7.8 9.4 12.8 7.6" fill="none" stroke="#111" stroke-width="1"/><circle cx="11.4" cy="12" r="1.4" fill="#111"/></svg>
<svg style="left:1228.6px;top:12px" width="17" height="16" viewBox="0 0 17 16"><path d="M0.8 5.4H3.6L7.4 1.4V14.6L3.6 10.6H0.8Z" fill="none" stroke="#111" stroke-width="1.1" stroke-linejoin="round"/><path d="M9.6 5.6Q10.8 8 9.6 10.4" fill="none" stroke="#111" stroke-width="1"/><path d="M11.8 3.6Q14.2 8 11.8 12.4" fill="none" stroke="#111" stroke-width="1"/><path d="M14 1.4Q17.6 8 14 14.6" fill="none" stroke="#111" stroke-width="1"/></svg>
<div class="t" id="clk" style="left:1256px;top:5.6px;font-size:12px">12:56 AM</div>
<div class="t" id="dat" style="left:1255px;top:23.2px;font-size:12px">5/24/2025</div>
<svg style="left:1324.8px;top:11.2px" width="17" height="17" viewBox="0 0 17 17"><path d="M0.6 0.6H16.4V12.4H11.2L8.5 15.6L5.8 12.4H0.6Z" fill="none" stroke="#111" stroke-width="1.1" stroke-linejoin="miter"/></svg>
<div class="a" style="left:1361px;top:0;width:1px;height:40px;background:#a8a8a8"></div>
</div>

</body></html>
